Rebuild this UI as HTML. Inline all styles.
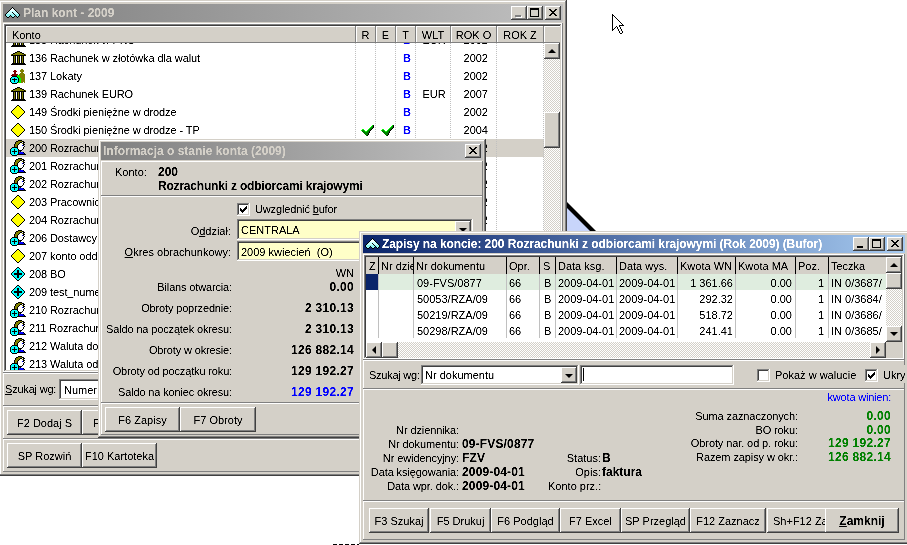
<!DOCTYPE html>
<html><head><meta charset="utf-8"><style>
html,body{margin:0;padding:0;}
body{will-change:transform;width:907px;height:545px;overflow:hidden;background:#fff;position:relative;font-family:"Liberation Sans",sans-serif;font-size:11px;color:#000;}
div{position:absolute;box-sizing:border-box;}
u{text-decoration:underline;text-underline-offset:1px;}
</style></head><body>
<svg width="0" height="0" style="position:absolute"><filter id="cr" x="0" y="0" width="100%" height="100%"><feComponentTransfer><feFuncA type="linear" slope="2" intercept="-0.45"/></feComponentTransfer></filter></svg>
<svg style="position:absolute;left:566px;top:195px;overflow:visible" width="40" height="40" shape-rendering="crispEdges"><polygon points="1,13 24,36 1,36" fill="#c8d5fb"/><polygon points="1,7 30,36 24,36 1,13" fill="#000" shape-rendering="auto"/></svg><svg style="position:absolute;left:612px;top:14px;overflow:visible" width="12" height="20" shape-rendering="crispEdges"><rect x="0" y="0" width="1" height="1" fill="#000"/><rect x="0" y="1" width="2" height="1" fill="#000"/><rect x="0" y="2" width="1" height="1" fill="#000"/><rect x="1" y="2" width="1" height="1" fill="#fff"/><rect x="2" y="2" width="1" height="1" fill="#000"/><rect x="0" y="3" width="1" height="1" fill="#000"/><rect x="1" y="3" width="2" height="1" fill="#fff"/><rect x="3" y="3" width="1" height="1" fill="#000"/><rect x="0" y="4" width="1" height="1" fill="#000"/><rect x="1" y="4" width="3" height="1" fill="#fff"/><rect x="4" y="4" width="1" height="1" fill="#000"/><rect x="0" y="5" width="1" height="1" fill="#000"/><rect x="1" y="5" width="4" height="1" fill="#fff"/><rect x="5" y="5" width="1" height="1" fill="#000"/><rect x="0" y="6" width="1" height="1" fill="#000"/><rect x="1" y="6" width="5" height="1" fill="#fff"/><rect x="6" y="6" width="1" height="1" fill="#000"/><rect x="0" y="7" width="1" height="1" fill="#000"/><rect x="1" y="7" width="6" height="1" fill="#fff"/><rect x="7" y="7" width="1" height="1" fill="#000"/><rect x="0" y="8" width="1" height="1" fill="#000"/><rect x="1" y="8" width="7" height="1" fill="#fff"/><rect x="8" y="8" width="1" height="1" fill="#000"/><rect x="0" y="9" width="1" height="1" fill="#000"/><rect x="1" y="9" width="8" height="1" fill="#fff"/><rect x="9" y="9" width="1" height="1" fill="#000"/><rect x="0" y="10" width="1" height="1" fill="#000"/><rect x="1" y="10" width="9" height="1" fill="#fff"/><rect x="10" y="10" width="1" height="1" fill="#000"/><rect x="0" y="11" width="1" height="1" fill="#000"/><rect x="1" y="11" width="6" height="1" fill="#fff"/><rect x="7" y="11" width="5" height="1" fill="#000"/><rect x="0" y="12" width="1" height="1" fill="#000"/><rect x="1" y="12" width="3" height="1" fill="#fff"/><rect x="4" y="12" width="1" height="1" fill="#000"/><rect x="5" y="12" width="2" height="1" fill="#fff"/><rect x="7" y="12" width="1" height="1" fill="#000"/><rect x="0" y="13" width="1" height="1" fill="#000"/><rect x="1" y="13" width="2" height="1" fill="#fff"/><rect x="3" y="13" width="1" height="1" fill="#000"/><rect x="5" y="13" width="1" height="1" fill="#000"/><rect x="6" y="13" width="2" height="1" fill="#fff"/><rect x="8" y="13" width="1" height="1" fill="#000"/><rect x="0" y="14" width="1" height="1" fill="#000"/><rect x="1" y="14" width="1" height="1" fill="#fff"/><rect x="2" y="14" width="1" height="1" fill="#000"/><rect x="5" y="14" width="1" height="1" fill="#000"/><rect x="6" y="14" width="2" height="1" fill="#fff"/><rect x="8" y="14" width="1" height="1" fill="#000"/><rect x="0" y="15" width="2" height="1" fill="#000"/><rect x="6" y="15" width="1" height="1" fill="#000"/><rect x="7" y="15" width="2" height="1" fill="#fff"/><rect x="9" y="15" width="1" height="1" fill="#000"/><rect x="0" y="16" width="1" height="1" fill="#000"/><rect x="6" y="16" width="1" height="1" fill="#000"/><rect x="7" y="16" width="2" height="1" fill="#fff"/><rect x="9" y="16" width="1" height="1" fill="#000"/><rect x="7" y="17" width="1" height="1" fill="#000"/><rect x="8" y="17" width="2" height="1" fill="#fff"/><rect x="10" y="17" width="1" height="1" fill="#000"/><rect x="7" y="18" width="1" height="1" fill="#000"/><rect x="8" y="18" width="2" height="1" fill="#fff"/><rect x="10" y="18" width="1" height="1" fill="#000"/><rect x="8" y="19" width="2" height="1" fill="#000"/></svg><div style="left:333px;top:544px;width:26px;height:1px;background:repeating-linear-gradient(to right,#000 0,#000 4px,transparent 4px,transparent 6px)"></div><div style="left:-1px;top:0px;width:568px;height:476px;overflow:hidden;background:#d4d0c8;box-shadow:inset -1px -1px #404040,inset 1px 1px #d4d0c8,inset -2px -2px #808080,inset 2px 2px #fff;"><div style="left:4px;top:4px;width:560px;height:18px;background:linear-gradient(to right,#808080,#c0c0c0)"></div><svg style="position:absolute;left:5px;top:7px;overflow:visible" width="17" height="11" shape-rendering="crispEdges"><rect x="8" y="0" width="1" height="1" fill="#000"/><rect x="7" y="1" width="1" height="1" fill="#000"/><rect x="8" y="1" width="1" height="1" fill="#f0ffff"/><rect x="9" y="1" width="1" height="1" fill="#000"/><rect x="6" y="2" width="1" height="1" fill="#000"/><rect x="7" y="2" width="3" height="1" fill="#f0ffff"/><rect x="10" y="2" width="1" height="1" fill="#000"/><rect x="5" y="3" width="1" height="1" fill="#000"/><rect x="6" y="3" width="5" height="1" fill="#f0ffff"/><rect x="11" y="3" width="1" height="1" fill="#000"/><rect x="4" y="4" width="1" height="1" fill="#000"/><rect x="5" y="4" width="7" height="1" fill="#c8ffff"/><rect x="12" y="4" width="1" height="1" fill="#000"/><rect x="3" y="5" width="1" height="1" fill="#000"/><rect x="4" y="5" width="4" height="1" fill="#c8ffff"/><rect x="8" y="5" width="1" height="1" fill="#000"/><rect x="9" y="5" width="4" height="1" fill="#c8ffff"/><rect x="13" y="5" width="1" height="1" fill="#000"/><rect x="2" y="6" width="1" height="1" fill="#000"/><rect x="3" y="6" width="6" height="1" fill="#c8ffff"/><rect x="9" y="6" width="1" height="1" fill="#000"/><rect x="10" y="6" width="4" height="1" fill="#c8ffff"/><rect x="14" y="6" width="1" height="1" fill="#000"/><rect x="1" y="7" width="1" height="1" fill="#000"/><rect x="2" y="7" width="8" height="1" fill="#90f4f4"/><rect x="10" y="7" width="1" height="1" fill="#000"/><rect x="11" y="7" width="4" height="1" fill="#90f4f4"/><rect x="15" y="7" width="1" height="1" fill="#000"/><rect x="1" y="8" width="1" height="1" fill="#000"/><rect x="2" y="8" width="4" height="1" fill="#90f4f4"/><rect x="6" y="8" width="1" height="1" fill="#000"/><rect x="7" y="8" width="4" height="1" fill="#90f4f4"/><rect x="11" y="8" width="1" height="1" fill="#000"/><rect x="12" y="8" width="3" height="1" fill="#90f4f4"/><rect x="15" y="8" width="1" height="1" fill="#000"/><rect x="2" y="9" width="1" height="1" fill="#000"/><rect x="3" y="9" width="2" height="1" fill="#90f4f4"/><rect x="5" y="9" width="1" height="1" fill="#000"/><rect x="7" y="9" width="1" height="1" fill="#000"/><rect x="8" y="9" width="2" height="1" fill="#90f4f4"/><rect x="10" y="9" width="1" height="1" fill="#000"/><rect x="12" y="9" width="1" height="1" fill="#000"/><rect x="13" y="9" width="1" height="1" fill="#90f4f4"/><rect x="14" y="9" width="1" height="1" fill="#000"/><rect x="3" y="10" width="2" height="1" fill="#000"/><rect x="8" y="10" width="2" height="1" fill="#000"/><rect x="13" y="10" width="1" height="1" fill="#000"/></svg><div style="left:24px;top:7px;font-size:12px;line-height:12px;font-weight:bold;color:#d4d0c8;white-space:pre;filter:url(#cr);">Plan kont - 2009</div><div style="left:512px;top:6px;width:16px;height:14px;background:#d4d0c8;box-shadow:inset -1px -1px #404040,inset 1px 1px #fff,inset -2px -2px #808080,inset 2px 2px #d4d0c8;"></div><div style="left:517px;top:16px;width:6px;height:2px;background:#fff"></div><div style="left:516px;top:15px;width:6px;height:2px;background:#808080"></div><div style="left:528px;top:6px;width:16px;height:14px;background:#d4d0c8;box-shadow:inset -1px -1px #404040,inset 1px 1px #fff,inset -2px -2px #808080,inset 2px 2px #d4d0c8;"></div><div style="left:531px;top:8px;width:9px;height:9px;box-shadow:inset 0 2px #000,inset 1px 0 #000,inset -1px 0 #000,inset 0 -1px #000"></div><div style="left:546px;top:6px;width:16px;height:14px;background:#d4d0c8;box-shadow:inset -1px -1px #404040,inset 1px 1px #fff,inset -2px -2px #808080,inset 2px 2px #d4d0c8;"></div><svg style="position:absolute;left:550px;top:9px;overflow:visible" width="8" height="7" shape-rendering="crispEdges"><rect x="0" y="0" width="2" height="1" fill="#000"/><rect x="6" y="0" width="2" height="1" fill="#000"/><rect x="1" y="1" width="2" height="1" fill="#000"/><rect x="5" y="1" width="2" height="1" fill="#000"/><rect x="2" y="2" width="4" height="1" fill="#000"/><rect x="3" y="3" width="2" height="1" fill="#000"/><rect x="2" y="4" width="4" height="1" fill="#000"/><rect x="1" y="5" width="2" height="1" fill="#000"/><rect x="5" y="5" width="2" height="1" fill="#000"/><rect x="0" y="6" width="2" height="1" fill="#000"/><rect x="6" y="6" width="2" height="1" fill="#000"/></svg><div style="left:4px;top:23px;width:560px;height:350px;box-shadow:inset -1px -1px #808080,inset 1px 1px #fff;"></div><div style="left:5px;top:24px;width:558px;height:348px;box-shadow:inset -1px -1px #fff,inset 1px 1px #808080,inset -2px -2px #d4d0c8,inset 2px 2px #404040;background:#fff"></div><div style="left:7px;top:26px;width:554px;height:344px;overflow:hidden;background:#fff"><div style="left:0px;top:0px;width:350px;height:17px;background:#d4d0c8;box-shadow:inset -1px -1px #808080,inset 1px 1px #fff"></div><div style="left:6px;top:4px;font-size:11px;line-height:11px;white-space:pre;filter:url(#cr);">Konto</div><div style="left:350px;top:0px;width:20px;height:17px;background:#d4d0c8;box-shadow:inset -1px -1px #808080,inset 1px 1px #fff"></div><div style="left:59.5px;top:4px;width:600px;text-align:center;font-size:11px;line-height:11px;white-space:pre;filter:url(#cr);">R</div><div style="left:370px;top:0px;width:20px;height:17px;background:#d4d0c8;box-shadow:inset -1px -1px #808080,inset 1px 1px #fff"></div><div style="left:79.5px;top:4px;width:600px;text-align:center;font-size:11px;line-height:11px;white-space:pre;filter:url(#cr);">E</div><div style="left:390px;top:0px;width:20px;height:17px;background:#d4d0c8;box-shadow:inset -1px -1px #808080,inset 1px 1px #fff"></div><div style="left:99.5px;top:4px;width:600px;text-align:center;font-size:11px;line-height:11px;white-space:pre;filter:url(#cr);">T</div><div style="left:410px;top:0px;width:35px;height:17px;background:#d4d0c8;box-shadow:inset -1px -1px #808080,inset 1px 1px #fff"></div><div style="left:127.0px;top:4px;width:600px;text-align:center;font-size:11px;line-height:11px;white-space:pre;filter:url(#cr);">WLT</div><div style="left:445px;top:0px;width:46px;height:17px;background:#d4d0c8;box-shadow:inset -1px -1px #808080,inset 1px 1px #fff"></div><div style="left:167.5px;top:4px;width:600px;text-align:center;font-size:11px;line-height:11px;white-space:pre;filter:url(#cr);">ROK O</div><div style="left:491px;top:0px;width:47px;height:17px;background:#d4d0c8;box-shadow:inset -1px -1px #808080,inset 1px 1px #fff"></div><div style="left:214.0px;top:4px;width:600px;text-align:center;font-size:11px;line-height:11px;white-space:pre;filter:url(#cr);">ROK Z</div><div style="left:538px;top:0px;width:17px;height:17px;background:#d4d0c8;box-shadow:inset -1px -1px #808080,inset 1px 1px #fff"></div><div style="left:0px;top:17px;width:538px;height:327px;overflow:hidden;"><svg style="position:absolute;left:4px;top:-11px;overflow:visible" width="16" height="15" shape-rendering="crispEdges"><rect x="7" y="1" width="3" height="1" fill="#000"/><rect x="5" y="2" width="2" height="1" fill="#000"/><rect x="7" y="2" width="3" height="1" fill="#808000"/><rect x="10" y="2" width="2" height="1" fill="#000"/><rect x="3" y="3" width="2" height="1" fill="#000"/><rect x="5" y="3" width="7" height="1" fill="#808000"/><rect x="12" y="3" width="2" height="1" fill="#000"/><rect x="1" y="4" width="1" height="1" fill="#808000"/><rect x="2" y="4" width="1" height="1" fill="#000"/><rect x="3" y="4" width="11" height="1" fill="#808000"/><rect x="14" y="4" width="1" height="1" fill="#000"/><rect x="15" y="4" width="1" height="1" fill="#808000"/><rect x="1" y="5" width="15" height="1" fill="#000"/><rect x="3" y="6" width="1" height="1" fill="#000"/><rect x="4" y="6" width="1" height="1" fill="#808000"/><rect x="5" y="6" width="1" height="1" fill="#000"/><rect x="6" y="6" width="1" height="1" fill="#fff"/><rect x="7" y="6" width="1" height="1" fill="#000"/><rect x="8" y="6" width="1" height="1" fill="#808000"/><rect x="9" y="6" width="1" height="1" fill="#000"/><rect x="10" y="6" width="1" height="1" fill="#fff"/><rect x="11" y="6" width="1" height="1" fill="#000"/><rect x="12" y="6" width="1" height="1" fill="#808000"/><rect x="13" y="6" width="1" height="1" fill="#000"/><rect x="3" y="7" width="1" height="1" fill="#000"/><rect x="4" y="7" width="1" height="1" fill="#808000"/><rect x="5" y="7" width="1" height="1" fill="#000"/><rect x="6" y="7" width="1" height="1" fill="#fff"/><rect x="7" y="7" width="1" height="1" fill="#000"/><rect x="8" y="7" width="1" height="1" fill="#808000"/><rect x="9" y="7" width="1" height="1" fill="#000"/><rect x="10" y="7" width="1" height="1" fill="#fff"/><rect x="11" y="7" width="1" height="1" fill="#000"/><rect x="12" y="7" width="1" height="1" fill="#808000"/><rect x="13" y="7" width="1" height="1" fill="#000"/><rect x="3" y="8" width="1" height="1" fill="#000"/><rect x="4" y="8" width="1" height="1" fill="#808000"/><rect x="5" y="8" width="1" height="1" fill="#000"/><rect x="6" y="8" width="1" height="1" fill="#fff"/><rect x="7" y="8" width="1" height="1" fill="#000"/><rect x="8" y="8" width="1" height="1" fill="#808000"/><rect x="9" y="8" width="1" height="1" fill="#000"/><rect x="10" y="8" width="1" height="1" fill="#fff"/><rect x="11" y="8" width="1" height="1" fill="#000"/><rect x="12" y="8" width="1" height="1" fill="#808000"/><rect x="13" y="8" width="1" height="1" fill="#000"/><rect x="3" y="9" width="1" height="1" fill="#000"/><rect x="4" y="9" width="1" height="1" fill="#808000"/><rect x="5" y="9" width="1" height="1" fill="#000"/><rect x="6" y="9" width="1" height="1" fill="#fff"/><rect x="7" y="9" width="1" height="1" fill="#000"/><rect x="8" y="9" width="1" height="1" fill="#808000"/><rect x="9" y="9" width="1" height="1" fill="#000"/><rect x="10" y="9" width="1" height="1" fill="#fff"/><rect x="11" y="9" width="1" height="1" fill="#000"/><rect x="12" y="9" width="1" height="1" fill="#808000"/><rect x="13" y="9" width="1" height="1" fill="#000"/><rect x="3" y="10" width="1" height="1" fill="#000"/><rect x="4" y="10" width="1" height="1" fill="#808000"/><rect x="5" y="10" width="1" height="1" fill="#000"/><rect x="6" y="10" width="1" height="1" fill="#fff"/><rect x="7" y="10" width="1" height="1" fill="#000"/><rect x="8" y="10" width="1" height="1" fill="#808000"/><rect x="9" y="10" width="1" height="1" fill="#000"/><rect x="10" y="10" width="1" height="1" fill="#fff"/><rect x="11" y="10" width="1" height="1" fill="#000"/><rect x="12" y="10" width="1" height="1" fill="#808000"/><rect x="13" y="10" width="1" height="1" fill="#000"/><rect x="3" y="11" width="1" height="1" fill="#000"/><rect x="4" y="11" width="1" height="1" fill="#808000"/><rect x="5" y="11" width="1" height="1" fill="#000"/><rect x="6" y="11" width="1" height="1" fill="#fff"/><rect x="7" y="11" width="1" height="1" fill="#000"/><rect x="8" y="11" width="1" height="1" fill="#808000"/><rect x="9" y="11" width="1" height="1" fill="#000"/><rect x="10" y="11" width="1" height="1" fill="#fff"/><rect x="11" y="11" width="1" height="1" fill="#000"/><rect x="12" y="11" width="1" height="1" fill="#808000"/><rect x="13" y="11" width="1" height="1" fill="#000"/><rect x="3" y="12" width="1" height="1" fill="#000"/><rect x="4" y="12" width="1" height="1" fill="#808000"/><rect x="5" y="12" width="1" height="1" fill="#000"/><rect x="6" y="12" width="1" height="1" fill="#fff"/><rect x="7" y="12" width="1" height="1" fill="#000"/><rect x="8" y="12" width="1" height="1" fill="#808000"/><rect x="9" y="12" width="1" height="1" fill="#000"/><rect x="10" y="12" width="1" height="1" fill="#fff"/><rect x="11" y="12" width="1" height="1" fill="#000"/><rect x="12" y="12" width="1" height="1" fill="#808000"/><rect x="13" y="12" width="1" height="1" fill="#000"/><rect x="2" y="13" width="13" height="1" fill="#000"/><rect x="1" y="14" width="15" height="1" fill="#000"/></svg><div style="left:23px;top:-8px;font-size:11px;line-height:11px;letter-spacing:-0.1px;white-space:pre;filter:url(#cr);">135 Rachunek w PKO</div><div style="left:101px;top:-8px;width:600px;text-align:center;font-size:11px;line-height:11px;font-weight:bold;color:#0000ff;white-space:pre;filter:url(#cr);">B</div><div style="left:128px;top:-8px;width:600px;text-align:center;font-size:11px;line-height:11px;white-space:pre;filter:url(#cr);">EUR</div><div style="left:-118px;top:-8px;width:600px;text-align:right;font-size:11px;line-height:11px;white-space:pre;filter:url(#cr);">2002</div><svg style="position:absolute;left:4px;top:7px;overflow:visible" width="16" height="15" shape-rendering="crispEdges"><rect x="7" y="1" width="3" height="1" fill="#000"/><rect x="5" y="2" width="2" height="1" fill="#000"/><rect x="7" y="2" width="3" height="1" fill="#808000"/><rect x="10" y="2" width="2" height="1" fill="#000"/><rect x="3" y="3" width="2" height="1" fill="#000"/><rect x="5" y="3" width="7" height="1" fill="#808000"/><rect x="12" y="3" width="2" height="1" fill="#000"/><rect x="1" y="4" width="1" height="1" fill="#808000"/><rect x="2" y="4" width="1" height="1" fill="#000"/><rect x="3" y="4" width="11" height="1" fill="#808000"/><rect x="14" y="4" width="1" height="1" fill="#000"/><rect x="15" y="4" width="1" height="1" fill="#808000"/><rect x="1" y="5" width="15" height="1" fill="#000"/><rect x="3" y="6" width="1" height="1" fill="#000"/><rect x="4" y="6" width="1" height="1" fill="#808000"/><rect x="5" y="6" width="1" height="1" fill="#000"/><rect x="6" y="6" width="1" height="1" fill="#fff"/><rect x="7" y="6" width="1" height="1" fill="#000"/><rect x="8" y="6" width="1" height="1" fill="#808000"/><rect x="9" y="6" width="1" height="1" fill="#000"/><rect x="10" y="6" width="1" height="1" fill="#fff"/><rect x="11" y="6" width="1" height="1" fill="#000"/><rect x="12" y="6" width="1" height="1" fill="#808000"/><rect x="13" y="6" width="1" height="1" fill="#000"/><rect x="3" y="7" width="1" height="1" fill="#000"/><rect x="4" y="7" width="1" height="1" fill="#808000"/><rect x="5" y="7" width="1" height="1" fill="#000"/><rect x="6" y="7" width="1" height="1" fill="#fff"/><rect x="7" y="7" width="1" height="1" fill="#000"/><rect x="8" y="7" width="1" height="1" fill="#808000"/><rect x="9" y="7" width="1" height="1" fill="#000"/><rect x="10" y="7" width="1" height="1" fill="#fff"/><rect x="11" y="7" width="1" height="1" fill="#000"/><rect x="12" y="7" width="1" height="1" fill="#808000"/><rect x="13" y="7" width="1" height="1" fill="#000"/><rect x="3" y="8" width="1" height="1" fill="#000"/><rect x="4" y="8" width="1" height="1" fill="#808000"/><rect x="5" y="8" width="1" height="1" fill="#000"/><rect x="6" y="8" width="1" height="1" fill="#fff"/><rect x="7" y="8" width="1" height="1" fill="#000"/><rect x="8" y="8" width="1" height="1" fill="#808000"/><rect x="9" y="8" width="1" height="1" fill="#000"/><rect x="10" y="8" width="1" height="1" fill="#fff"/><rect x="11" y="8" width="1" height="1" fill="#000"/><rect x="12" y="8" width="1" height="1" fill="#808000"/><rect x="13" y="8" width="1" height="1" fill="#000"/><rect x="3" y="9" width="1" height="1" fill="#000"/><rect x="4" y="9" width="1" height="1" fill="#808000"/><rect x="5" y="9" width="1" height="1" fill="#000"/><rect x="6" y="9" width="1" height="1" fill="#fff"/><rect x="7" y="9" width="1" height="1" fill="#000"/><rect x="8" y="9" width="1" height="1" fill="#808000"/><rect x="9" y="9" width="1" height="1" fill="#000"/><rect x="10" y="9" width="1" height="1" fill="#fff"/><rect x="11" y="9" width="1" height="1" fill="#000"/><rect x="12" y="9" width="1" height="1" fill="#808000"/><rect x="13" y="9" width="1" height="1" fill="#000"/><rect x="3" y="10" width="1" height="1" fill="#000"/><rect x="4" y="10" width="1" height="1" fill="#808000"/><rect x="5" y="10" width="1" height="1" fill="#000"/><rect x="6" y="10" width="1" height="1" fill="#fff"/><rect x="7" y="10" width="1" height="1" fill="#000"/><rect x="8" y="10" width="1" height="1" fill="#808000"/><rect x="9" y="10" width="1" height="1" fill="#000"/><rect x="10" y="10" width="1" height="1" fill="#fff"/><rect x="11" y="10" width="1" height="1" fill="#000"/><rect x="12" y="10" width="1" height="1" fill="#808000"/><rect x="13" y="10" width="1" height="1" fill="#000"/><rect x="3" y="11" width="1" height="1" fill="#000"/><rect x="4" y="11" width="1" height="1" fill="#808000"/><rect x="5" y="11" width="1" height="1" fill="#000"/><rect x="6" y="11" width="1" height="1" fill="#fff"/><rect x="7" y="11" width="1" height="1" fill="#000"/><rect x="8" y="11" width="1" height="1" fill="#808000"/><rect x="9" y="11" width="1" height="1" fill="#000"/><rect x="10" y="11" width="1" height="1" fill="#fff"/><rect x="11" y="11" width="1" height="1" fill="#000"/><rect x="12" y="11" width="1" height="1" fill="#808000"/><rect x="13" y="11" width="1" height="1" fill="#000"/><rect x="3" y="12" width="1" height="1" fill="#000"/><rect x="4" y="12" width="1" height="1" fill="#808000"/><rect x="5" y="12" width="1" height="1" fill="#000"/><rect x="6" y="12" width="1" height="1" fill="#fff"/><rect x="7" y="12" width="1" height="1" fill="#000"/><rect x="8" y="12" width="1" height="1" fill="#808000"/><rect x="9" y="12" width="1" height="1" fill="#000"/><rect x="10" y="12" width="1" height="1" fill="#fff"/><rect x="11" y="12" width="1" height="1" fill="#000"/><rect x="12" y="12" width="1" height="1" fill="#808000"/><rect x="13" y="12" width="1" height="1" fill="#000"/><rect x="2" y="13" width="13" height="1" fill="#000"/><rect x="1" y="14" width="15" height="1" fill="#000"/></svg><div style="left:23px;top:10px;font-size:11px;line-height:11px;letter-spacing:-0.1px;white-space:pre;filter:url(#cr);">136 Rachunek w złotówka dla walut</div><div style="left:101px;top:10px;width:600px;text-align:center;font-size:11px;line-height:11px;font-weight:bold;color:#0000ff;white-space:pre;filter:url(#cr);">B</div><div style="left:-118px;top:10px;width:600px;text-align:right;font-size:11px;line-height:11px;white-space:pre;filter:url(#cr);">2002</div><svg style="position:absolute;left:4px;top:25px;overflow:visible" width="16" height="16" shape-rendering="crispEdges"><rect x="11" y="1" width="2" height="1" fill="#808000"/><rect x="4" y="2" width="2" height="1" fill="#800000"/><rect x="10" y="2" width="4" height="1" fill="#808000"/><rect x="3" y="3" width="4" height="1" fill="#800000"/><rect x="10" y="3" width="4" height="1" fill="#808000"/><rect x="4" y="4" width="2" height="1" fill="#800000"/><rect x="11" y="4" width="2" height="1" fill="#808000"/><rect x="4" y="5" width="2" height="1" fill="#800000"/><rect x="10" y="5" width="4" height="1" fill="#808000"/><rect x="2" y="6" width="6" height="1" fill="#800000"/><rect x="9" y="6" width="6" height="1" fill="#808000"/><rect x="1" y="7" width="6" height="1" fill="#800000"/><rect x="7" y="7" width="2" height="1" fill="#00ff00"/><rect x="9" y="7" width="6" height="1" fill="#808000"/><rect x="2" y="8" width="5" height="1" fill="#000"/><rect x="7" y="8" width="3" height="1" fill="#00ff00"/><rect x="10" y="8" width="5" height="1" fill="#808000"/><rect x="1" y="9" width="1" height="1" fill="#000"/><rect x="2" y="9" width="5" height="1" fill="#00ffff"/><rect x="7" y="9" width="1" height="1" fill="#000"/><rect x="8" y="9" width="2" height="1" fill="#00ff00"/><rect x="10" y="9" width="5" height="1" fill="#808000"/><rect x="0" y="10" width="1" height="1" fill="#000"/><rect x="1" y="10" width="3" height="1" fill="#00ffff"/><rect x="4" y="10" width="1" height="1" fill="#000"/><rect x="5" y="10" width="3" height="1" fill="#00ffff"/><rect x="8" y="10" width="1" height="1" fill="#000"/><rect x="9" y="10" width="2" height="1" fill="#00ff00"/><rect x="11" y="10" width="4" height="1" fill="#808000"/><rect x="0" y="11" width="1" height="1" fill="#000"/><rect x="1" y="11" width="1" height="1" fill="#00ffff"/><rect x="2" y="11" width="5" height="1" fill="#000"/><rect x="7" y="11" width="1" height="1" fill="#00ffff"/><rect x="8" y="11" width="1" height="1" fill="#000"/><rect x="9" y="11" width="2" height="1" fill="#00ff00"/><rect x="11" y="11" width="4" height="1" fill="#808000"/><rect x="0" y="12" width="1" height="1" fill="#000"/><rect x="1" y="12" width="3" height="1" fill="#00ffff"/><rect x="4" y="12" width="1" height="1" fill="#000"/><rect x="5" y="12" width="3" height="1" fill="#00ffff"/><rect x="8" y="12" width="1" height="1" fill="#000"/><rect x="9" y="12" width="2" height="1" fill="#00ff00"/><rect x="11" y="12" width="4" height="1" fill="#808000"/><rect x="0" y="13" width="1" height="1" fill="#000"/><rect x="1" y="13" width="3" height="1" fill="#00ffff"/><rect x="4" y="13" width="1" height="1" fill="#000"/><rect x="5" y="13" width="3" height="1" fill="#00ffff"/><rect x="8" y="13" width="1" height="1" fill="#000"/><rect x="9" y="13" width="2" height="1" fill="#00ff00"/><rect x="11" y="13" width="4" height="1" fill="#808000"/><rect x="1" y="14" width="1" height="1" fill="#000"/><rect x="2" y="14" width="5" height="1" fill="#00ffff"/><rect x="7" y="14" width="1" height="1" fill="#000"/><rect x="8" y="14" width="3" height="1" fill="#00ff00"/><rect x="11" y="14" width="2" height="1" fill="#808000"/><rect x="14" y="14" width="1" height="1" fill="#808000"/><rect x="2" y="15" width="5" height="1" fill="#000"/></svg><div style="left:23px;top:28px;font-size:11px;line-height:11px;letter-spacing:-0.1px;white-space:pre;filter:url(#cr);">137 Lokaty</div><div style="left:101px;top:28px;width:600px;text-align:center;font-size:11px;line-height:11px;font-weight:bold;color:#0000ff;white-space:pre;filter:url(#cr);">B</div><div style="left:-118px;top:28px;width:600px;text-align:right;font-size:11px;line-height:11px;white-space:pre;filter:url(#cr);">2002</div><svg style="position:absolute;left:4px;top:43px;overflow:visible" width="16" height="15" shape-rendering="crispEdges"><rect x="7" y="1" width="3" height="1" fill="#000"/><rect x="5" y="2" width="2" height="1" fill="#000"/><rect x="7" y="2" width="3" height="1" fill="#808000"/><rect x="10" y="2" width="2" height="1" fill="#000"/><rect x="3" y="3" width="2" height="1" fill="#000"/><rect x="5" y="3" width="7" height="1" fill="#808000"/><rect x="12" y="3" width="2" height="1" fill="#000"/><rect x="1" y="4" width="1" height="1" fill="#808000"/><rect x="2" y="4" width="1" height="1" fill="#000"/><rect x="3" y="4" width="11" height="1" fill="#808000"/><rect x="14" y="4" width="1" height="1" fill="#000"/><rect x="15" y="4" width="1" height="1" fill="#808000"/><rect x="1" y="5" width="15" height="1" fill="#000"/><rect x="3" y="6" width="1" height="1" fill="#000"/><rect x="4" y="6" width="1" height="1" fill="#808000"/><rect x="5" y="6" width="1" height="1" fill="#000"/><rect x="6" y="6" width="1" height="1" fill="#fff"/><rect x="7" y="6" width="1" height="1" fill="#000"/><rect x="8" y="6" width="1" height="1" fill="#808000"/><rect x="9" y="6" width="1" height="1" fill="#000"/><rect x="10" y="6" width="1" height="1" fill="#fff"/><rect x="11" y="6" width="1" height="1" fill="#000"/><rect x="12" y="6" width="1" height="1" fill="#808000"/><rect x="13" y="6" width="1" height="1" fill="#000"/><rect x="3" y="7" width="1" height="1" fill="#000"/><rect x="4" y="7" width="1" height="1" fill="#808000"/><rect x="5" y="7" width="1" height="1" fill="#000"/><rect x="6" y="7" width="1" height="1" fill="#fff"/><rect x="7" y="7" width="1" height="1" fill="#000"/><rect x="8" y="7" width="1" height="1" fill="#808000"/><rect x="9" y="7" width="1" height="1" fill="#000"/><rect x="10" y="7" width="1" height="1" fill="#fff"/><rect x="11" y="7" width="1" height="1" fill="#000"/><rect x="12" y="7" width="1" height="1" fill="#808000"/><rect x="13" y="7" width="1" height="1" fill="#000"/><rect x="3" y="8" width="1" height="1" fill="#000"/><rect x="4" y="8" width="1" height="1" fill="#808000"/><rect x="5" y="8" width="1" height="1" fill="#000"/><rect x="6" y="8" width="1" height="1" fill="#fff"/><rect x="7" y="8" width="1" height="1" fill="#000"/><rect x="8" y="8" width="1" height="1" fill="#808000"/><rect x="9" y="8" width="1" height="1" fill="#000"/><rect x="10" y="8" width="1" height="1" fill="#fff"/><rect x="11" y="8" width="1" height="1" fill="#000"/><rect x="12" y="8" width="1" height="1" fill="#808000"/><rect x="13" y="8" width="1" height="1" fill="#000"/><rect x="3" y="9" width="1" height="1" fill="#000"/><rect x="4" y="9" width="1" height="1" fill="#808000"/><rect x="5" y="9" width="1" height="1" fill="#000"/><rect x="6" y="9" width="1" height="1" fill="#fff"/><rect x="7" y="9" width="1" height="1" fill="#000"/><rect x="8" y="9" width="1" height="1" fill="#808000"/><rect x="9" y="9" width="1" height="1" fill="#000"/><rect x="10" y="9" width="1" height="1" fill="#fff"/><rect x="11" y="9" width="1" height="1" fill="#000"/><rect x="12" y="9" width="1" height="1" fill="#808000"/><rect x="13" y="9" width="1" height="1" fill="#000"/><rect x="3" y="10" width="1" height="1" fill="#000"/><rect x="4" y="10" width="1" height="1" fill="#808000"/><rect x="5" y="10" width="1" height="1" fill="#000"/><rect x="6" y="10" width="1" height="1" fill="#fff"/><rect x="7" y="10" width="1" height="1" fill="#000"/><rect x="8" y="10" width="1" height="1" fill="#808000"/><rect x="9" y="10" width="1" height="1" fill="#000"/><rect x="10" y="10" width="1" height="1" fill="#fff"/><rect x="11" y="10" width="1" height="1" fill="#000"/><rect x="12" y="10" width="1" height="1" fill="#808000"/><rect x="13" y="10" width="1" height="1" fill="#000"/><rect x="3" y="11" width="1" height="1" fill="#000"/><rect x="4" y="11" width="1" height="1" fill="#808000"/><rect x="5" y="11" width="1" height="1" fill="#000"/><rect x="6" y="11" width="1" height="1" fill="#fff"/><rect x="7" y="11" width="1" height="1" fill="#000"/><rect x="8" y="11" width="1" height="1" fill="#808000"/><rect x="9" y="11" width="1" height="1" fill="#000"/><rect x="10" y="11" width="1" height="1" fill="#fff"/><rect x="11" y="11" width="1" height="1" fill="#000"/><rect x="12" y="11" width="1" height="1" fill="#808000"/><rect x="13" y="11" width="1" height="1" fill="#000"/><rect x="3" y="12" width="1" height="1" fill="#000"/><rect x="4" y="12" width="1" height="1" fill="#808000"/><rect x="5" y="12" width="1" height="1" fill="#000"/><rect x="6" y="12" width="1" height="1" fill="#fff"/><rect x="7" y="12" width="1" height="1" fill="#000"/><rect x="8" y="12" width="1" height="1" fill="#808000"/><rect x="9" y="12" width="1" height="1" fill="#000"/><rect x="10" y="12" width="1" height="1" fill="#fff"/><rect x="11" y="12" width="1" height="1" fill="#000"/><rect x="12" y="12" width="1" height="1" fill="#808000"/><rect x="13" y="12" width="1" height="1" fill="#000"/><rect x="2" y="13" width="13" height="1" fill="#000"/><rect x="1" y="14" width="15" height="1" fill="#000"/></svg><div style="left:23px;top:46px;font-size:11px;line-height:11px;letter-spacing:-0.1px;white-space:pre;filter:url(#cr);">139 Rachunek EURO</div><div style="left:101px;top:46px;width:600px;text-align:center;font-size:11px;line-height:11px;font-weight:bold;color:#0000ff;white-space:pre;filter:url(#cr);">B</div><div style="left:128px;top:46px;width:600px;text-align:center;font-size:11px;line-height:11px;white-space:pre;filter:url(#cr);">EUR</div><div style="left:-118px;top:46px;width:600px;text-align:right;font-size:11px;line-height:11px;white-space:pre;filter:url(#cr);">2007</div><svg style="position:absolute;left:4px;top:61px;overflow:visible" width="16" height="15" shape-rendering="crispEdges"><rect x="7" y="1" width="2" height="1" fill="#000"/><rect x="6" y="2" width="1" height="1" fill="#000"/><rect x="7" y="2" width="2" height="1" fill="#ffff00"/><rect x="9" y="2" width="1" height="1" fill="#000"/><rect x="5" y="3" width="1" height="1" fill="#000"/><rect x="6" y="3" width="4" height="1" fill="#ffff00"/><rect x="10" y="3" width="1" height="1" fill="#000"/><rect x="4" y="4" width="1" height="1" fill="#000"/><rect x="5" y="4" width="6" height="1" fill="#ffff00"/><rect x="11" y="4" width="1" height="1" fill="#000"/><rect x="3" y="5" width="1" height="1" fill="#000"/><rect x="4" y="5" width="8" height="1" fill="#ffff00"/><rect x="12" y="5" width="1" height="1" fill="#000"/><rect x="2" y="6" width="1" height="1" fill="#000"/><rect x="3" y="6" width="10" height="1" fill="#ffff00"/><rect x="13" y="6" width="1" height="1" fill="#000"/><rect x="1" y="7" width="1" height="1" fill="#000"/><rect x="2" y="7" width="12" height="1" fill="#ffff00"/><rect x="14" y="7" width="1" height="1" fill="#000"/><rect x="1" y="8" width="1" height="1" fill="#000"/><rect x="2" y="8" width="12" height="1" fill="#ffff00"/><rect x="14" y="8" width="1" height="1" fill="#000"/><rect x="2" y="9" width="1" height="1" fill="#000"/><rect x="3" y="9" width="10" height="1" fill="#ffff00"/><rect x="13" y="9" width="1" height="1" fill="#000"/><rect x="3" y="10" width="1" height="1" fill="#000"/><rect x="4" y="10" width="8" height="1" fill="#ffff00"/><rect x="12" y="10" width="1" height="1" fill="#000"/><rect x="4" y="11" width="1" height="1" fill="#000"/><rect x="5" y="11" width="6" height="1" fill="#ffff00"/><rect x="11" y="11" width="1" height="1" fill="#000"/><rect x="5" y="12" width="1" height="1" fill="#000"/><rect x="6" y="12" width="4" height="1" fill="#ffff00"/><rect x="10" y="12" width="1" height="1" fill="#000"/><rect x="6" y="13" width="1" height="1" fill="#000"/><rect x="7" y="13" width="2" height="1" fill="#ffff00"/><rect x="9" y="13" width="1" height="1" fill="#000"/><rect x="7" y="14" width="2" height="1" fill="#000"/></svg><div style="left:23px;top:64px;font-size:11px;line-height:11px;letter-spacing:-0.1px;white-space:pre;filter:url(#cr);">149 Środki pieniężne w drodze</div><div style="left:101px;top:64px;width:600px;text-align:center;font-size:11px;line-height:11px;font-weight:bold;color:#0000ff;white-space:pre;filter:url(#cr);">B</div><div style="left:-118px;top:64px;width:600px;text-align:right;font-size:11px;line-height:11px;white-space:pre;filter:url(#cr);">2002</div><svg style="position:absolute;left:4px;top:79px;overflow:visible" width="16" height="15" shape-rendering="crispEdges"><rect x="7" y="1" width="2" height="1" fill="#000"/><rect x="6" y="2" width="1" height="1" fill="#000"/><rect x="7" y="2" width="2" height="1" fill="#ffff00"/><rect x="9" y="2" width="1" height="1" fill="#000"/><rect x="5" y="3" width="1" height="1" fill="#000"/><rect x="6" y="3" width="4" height="1" fill="#ffff00"/><rect x="10" y="3" width="1" height="1" fill="#000"/><rect x="4" y="4" width="1" height="1" fill="#000"/><rect x="5" y="4" width="6" height="1" fill="#ffff00"/><rect x="11" y="4" width="1" height="1" fill="#000"/><rect x="3" y="5" width="1" height="1" fill="#000"/><rect x="4" y="5" width="8" height="1" fill="#ffff00"/><rect x="12" y="5" width="1" height="1" fill="#000"/><rect x="2" y="6" width="1" height="1" fill="#000"/><rect x="3" y="6" width="10" height="1" fill="#ffff00"/><rect x="13" y="6" width="1" height="1" fill="#000"/><rect x="1" y="7" width="1" height="1" fill="#000"/><rect x="2" y="7" width="12" height="1" fill="#ffff00"/><rect x="14" y="7" width="1" height="1" fill="#000"/><rect x="1" y="8" width="1" height="1" fill="#000"/><rect x="2" y="8" width="12" height="1" fill="#ffff00"/><rect x="14" y="8" width="1" height="1" fill="#000"/><rect x="2" y="9" width="1" height="1" fill="#000"/><rect x="3" y="9" width="10" height="1" fill="#ffff00"/><rect x="13" y="9" width="1" height="1" fill="#000"/><rect x="3" y="10" width="1" height="1" fill="#000"/><rect x="4" y="10" width="8" height="1" fill="#ffff00"/><rect x="12" y="10" width="1" height="1" fill="#000"/><rect x="4" y="11" width="1" height="1" fill="#000"/><rect x="5" y="11" width="6" height="1" fill="#ffff00"/><rect x="11" y="11" width="1" height="1" fill="#000"/><rect x="5" y="12" width="1" height="1" fill="#000"/><rect x="6" y="12" width="4" height="1" fill="#ffff00"/><rect x="10" y="12" width="1" height="1" fill="#000"/><rect x="6" y="13" width="1" height="1" fill="#000"/><rect x="7" y="13" width="2" height="1" fill="#ffff00"/><rect x="9" y="13" width="1" height="1" fill="#000"/><rect x="7" y="14" width="2" height="1" fill="#000"/></svg><div style="left:23px;top:82px;font-size:11px;line-height:11px;letter-spacing:-0.1px;white-space:pre;filter:url(#cr);">150 Środki pieniężne w drodze - TP</div><svg style="position:absolute;left:355px;top:82px;overflow:visible" width="13" height="11" shape-rendering="crispEdges"><rect x="11" y="0" width="1" height="1" fill="#00ff00"/><rect x="12" y="0" width="1" height="1" fill="#000"/><rect x="10" y="1" width="1" height="1" fill="#00ff00"/><rect x="11" y="1" width="1" height="1" fill="#008000"/><rect x="12" y="1" width="1" height="1" fill="#000"/><rect x="9" y="2" width="1" height="1" fill="#00ff00"/><rect x="10" y="2" width="2" height="1" fill="#008000"/><rect x="12" y="2" width="1" height="1" fill="#000"/><rect x="8" y="3" width="1" height="1" fill="#00ff00"/><rect x="9" y="3" width="2" height="1" fill="#008000"/><rect x="11" y="3" width="1" height="1" fill="#000"/><rect x="1" y="4" width="2" height="1" fill="#00ff00"/><rect x="7" y="4" width="1" height="1" fill="#00ff00"/><rect x="8" y="4" width="2" height="1" fill="#008000"/><rect x="10" y="4" width="1" height="1" fill="#000"/><rect x="0" y="5" width="1" height="1" fill="#00ff00"/><rect x="1" y="5" width="2" height="1" fill="#008000"/><rect x="3" y="5" width="1" height="1" fill="#00ff00"/><rect x="6" y="5" width="1" height="1" fill="#00ff00"/><rect x="7" y="5" width="2" height="1" fill="#008000"/><rect x="9" y="5" width="1" height="1" fill="#000"/><rect x="1" y="6" width="3" height="1" fill="#008000"/><rect x="4" y="6" width="2" height="1" fill="#00ff00"/><rect x="6" y="6" width="2" height="1" fill="#008000"/><rect x="8" y="6" width="1" height="1" fill="#000"/><rect x="2" y="7" width="6" height="1" fill="#008000"/><rect x="8" y="7" width="1" height="1" fill="#000"/><rect x="3" y="8" width="4" height="1" fill="#008000"/><rect x="7" y="8" width="1" height="1" fill="#000"/><rect x="4" y="9" width="3" height="1" fill="#008000"/><rect x="7" y="9" width="1" height="1" fill="#000"/><rect x="5" y="10" width="1" height="1" fill="#008000"/><rect x="6" y="10" width="1" height="1" fill="#000"/></svg><svg style="position:absolute;left:375px;top:82px;overflow:visible" width="13" height="11" shape-rendering="crispEdges"><rect x="11" y="0" width="1" height="1" fill="#00ff00"/><rect x="12" y="0" width="1" height="1" fill="#000"/><rect x="10" y="1" width="1" height="1" fill="#00ff00"/><rect x="11" y="1" width="1" height="1" fill="#008000"/><rect x="12" y="1" width="1" height="1" fill="#000"/><rect x="9" y="2" width="1" height="1" fill="#00ff00"/><rect x="10" y="2" width="2" height="1" fill="#008000"/><rect x="12" y="2" width="1" height="1" fill="#000"/><rect x="8" y="3" width="1" height="1" fill="#00ff00"/><rect x="9" y="3" width="2" height="1" fill="#008000"/><rect x="11" y="3" width="1" height="1" fill="#000"/><rect x="1" y="4" width="2" height="1" fill="#00ff00"/><rect x="7" y="4" width="1" height="1" fill="#00ff00"/><rect x="8" y="4" width="2" height="1" fill="#008000"/><rect x="10" y="4" width="1" height="1" fill="#000"/><rect x="0" y="5" width="1" height="1" fill="#00ff00"/><rect x="1" y="5" width="2" height="1" fill="#008000"/><rect x="3" y="5" width="1" height="1" fill="#00ff00"/><rect x="6" y="5" width="1" height="1" fill="#00ff00"/><rect x="7" y="5" width="2" height="1" fill="#008000"/><rect x="9" y="5" width="1" height="1" fill="#000"/><rect x="1" y="6" width="3" height="1" fill="#008000"/><rect x="4" y="6" width="2" height="1" fill="#00ff00"/><rect x="6" y="6" width="2" height="1" fill="#008000"/><rect x="8" y="6" width="1" height="1" fill="#000"/><rect x="2" y="7" width="6" height="1" fill="#008000"/><rect x="8" y="7" width="1" height="1" fill="#000"/><rect x="3" y="8" width="4" height="1" fill="#008000"/><rect x="7" y="8" width="1" height="1" fill="#000"/><rect x="4" y="9" width="3" height="1" fill="#008000"/><rect x="7" y="9" width="1" height="1" fill="#000"/><rect x="5" y="10" width="1" height="1" fill="#008000"/><rect x="6" y="10" width="1" height="1" fill="#000"/></svg><div style="left:101px;top:82px;width:600px;text-align:center;font-size:11px;line-height:11px;font-weight:bold;color:#0000ff;white-space:pre;filter:url(#cr);">B</div><div style="left:-118px;top:82px;width:600px;text-align:right;font-size:11px;line-height:11px;white-space:pre;filter:url(#cr);">2004</div><div style="left:0px;top:96px;width:538px;height:18px;background:#d4d0c8"></div><svg style="position:absolute;left:4px;top:97px;overflow:visible" width="16" height="16" shape-rendering="crispEdges"><rect x="8" y="0" width="4" height="1" fill="#000"/><rect x="6" y="1" width="2" height="1" fill="#000"/><rect x="8" y="1" width="4" height="1" fill="#808000"/><rect x="12" y="1" width="2" height="1" fill="#000"/><rect x="5" y="2" width="1" height="1" fill="#000"/><rect x="6" y="2" width="4" height="1" fill="#808000"/><rect x="10" y="2" width="2" height="1" fill="#000"/><rect x="12" y="2" width="1" height="1" fill="#fff"/><rect x="13" y="2" width="2" height="1" fill="#000"/><rect x="5" y="3" width="1" height="1" fill="#000"/><rect x="6" y="3" width="3" height="1" fill="#808000"/><rect x="9" y="3" width="1" height="1" fill="#000"/><rect x="10" y="3" width="2" height="1" fill="#fff"/><rect x="12" y="3" width="1" height="1" fill="#808000"/><rect x="13" y="3" width="1" height="1" fill="#000"/><rect x="4" y="4" width="1" height="1" fill="#000"/><rect x="5" y="4" width="3" height="1" fill="#808000"/><rect x="8" y="4" width="1" height="1" fill="#000"/><rect x="9" y="4" width="4" height="1" fill="#fff"/><rect x="13" y="4" width="2" height="1" fill="#000"/><rect x="4" y="5" width="1" height="1" fill="#000"/><rect x="5" y="5" width="2" height="1" fill="#808000"/><rect x="7" y="5" width="1" height="1" fill="#000"/><rect x="8" y="5" width="4" height="1" fill="#fff"/><rect x="12" y="5" width="1" height="1" fill="#0000ff"/><rect x="13" y="5" width="1" height="1" fill="#000"/><rect x="4" y="6" width="1" height="1" fill="#000"/><rect x="5" y="6" width="2" height="1" fill="#808000"/><rect x="7" y="6" width="1" height="1" fill="#000"/><rect x="8" y="6" width="6" height="1" fill="#fff"/><rect x="14" y="6" width="1" height="1" fill="#000"/><rect x="2" y="7" width="6" height="1" fill="#000"/><rect x="8" y="7" width="5" height="1" fill="#fff"/><rect x="13" y="7" width="1" height="1" fill="#000"/><rect x="1" y="8" width="1" height="1" fill="#000"/><rect x="2" y="8" width="5" height="1" fill="#00ffff"/><rect x="7" y="8" width="1" height="1" fill="#000"/><rect x="8" y="8" width="5" height="1" fill="#fff"/><rect x="13" y="8" width="1" height="1" fill="#000"/><rect x="0" y="9" width="1" height="1" fill="#000"/><rect x="1" y="9" width="3" height="1" fill="#00ffff"/><rect x="4" y="9" width="1" height="1" fill="#000"/><rect x="5" y="9" width="3" height="1" fill="#00ffff"/><rect x="8" y="9" width="1" height="1" fill="#000"/><rect x="9" y="9" width="3" height="1" fill="#fff"/><rect x="12" y="9" width="1" height="1" fill="#000"/><rect x="0" y="10" width="1" height="1" fill="#000"/><rect x="1" y="10" width="3" height="1" fill="#00ffff"/><rect x="4" y="10" width="1" height="1" fill="#000"/><rect x="5" y="10" width="3" height="1" fill="#00ffff"/><rect x="8" y="10" width="4" height="1" fill="#000"/><rect x="0" y="11" width="1" height="1" fill="#000"/><rect x="1" y="11" width="1" height="1" fill="#00ffff"/><rect x="2" y="11" width="5" height="1" fill="#000"/><rect x="7" y="11" width="1" height="1" fill="#00ffff"/><rect x="8" y="11" width="1" height="1" fill="#000"/><rect x="9" y="11" width="1" height="1" fill="#808000"/><rect x="10" y="11" width="1" height="1" fill="#000"/><rect x="0" y="12" width="1" height="1" fill="#000"/><rect x="1" y="12" width="3" height="1" fill="#00ffff"/><rect x="4" y="12" width="1" height="1" fill="#000"/><rect x="5" y="12" width="3" height="1" fill="#00ffff"/><rect x="8" y="12" width="1" height="1" fill="#000"/><rect x="9" y="12" width="4" height="1" fill="#0000ff"/><rect x="13" y="12" width="1" height="1" fill="#000"/><rect x="0" y="13" width="1" height="1" fill="#000"/><rect x="1" y="13" width="3" height="1" fill="#00ffff"/><rect x="4" y="13" width="1" height="1" fill="#000"/><rect x="5" y="13" width="3" height="1" fill="#00ffff"/><rect x="8" y="13" width="1" height="1" fill="#000"/><rect x="9" y="13" width="5" height="1" fill="#0000ff"/><rect x="14" y="13" width="1" height="1" fill="#000"/><rect x="1" y="14" width="1" height="1" fill="#000"/><rect x="2" y="14" width="5" height="1" fill="#00ffff"/><rect x="7" y="14" width="9" height="1" fill="#000"/><rect x="2" y="15" width="5" height="1" fill="#000"/></svg><div style="left:23px;top:100px;font-size:11px;line-height:11px;letter-spacing:-0.1px;white-space:pre;filter:url(#cr);">200 Rozrachunki z odbiorcami krajowymi</div><div style="left:101px;top:100px;width:600px;text-align:center;font-size:11px;line-height:11px;font-weight:bold;color:#0000ff;white-space:pre;filter:url(#cr);">B</div><div style="left:-118px;top:100px;width:600px;text-align:right;font-size:11px;line-height:11px;white-space:pre;filter:url(#cr);">2002</div><svg style="position:absolute;left:4px;top:115px;overflow:visible" width="16" height="16" shape-rendering="crispEdges"><rect x="8" y="0" width="4" height="1" fill="#000"/><rect x="6" y="1" width="2" height="1" fill="#000"/><rect x="8" y="1" width="4" height="1" fill="#808000"/><rect x="12" y="1" width="2" height="1" fill="#000"/><rect x="5" y="2" width="1" height="1" fill="#000"/><rect x="6" y="2" width="4" height="1" fill="#808000"/><rect x="10" y="2" width="2" height="1" fill="#000"/><rect x="12" y="2" width="1" height="1" fill="#fff"/><rect x="13" y="2" width="2" height="1" fill="#000"/><rect x="5" y="3" width="1" height="1" fill="#000"/><rect x="6" y="3" width="3" height="1" fill="#808000"/><rect x="9" y="3" width="1" height="1" fill="#000"/><rect x="10" y="3" width="2" height="1" fill="#fff"/><rect x="12" y="3" width="1" height="1" fill="#808000"/><rect x="13" y="3" width="1" height="1" fill="#000"/><rect x="4" y="4" width="1" height="1" fill="#000"/><rect x="5" y="4" width="3" height="1" fill="#808000"/><rect x="8" y="4" width="1" height="1" fill="#000"/><rect x="9" y="4" width="4" height="1" fill="#fff"/><rect x="13" y="4" width="2" height="1" fill="#000"/><rect x="4" y="5" width="1" height="1" fill="#000"/><rect x="5" y="5" width="2" height="1" fill="#808000"/><rect x="7" y="5" width="1" height="1" fill="#000"/><rect x="8" y="5" width="4" height="1" fill="#fff"/><rect x="12" y="5" width="1" height="1" fill="#0000ff"/><rect x="13" y="5" width="1" height="1" fill="#000"/><rect x="4" y="6" width="1" height="1" fill="#000"/><rect x="5" y="6" width="2" height="1" fill="#808000"/><rect x="7" y="6" width="1" height="1" fill="#000"/><rect x="8" y="6" width="6" height="1" fill="#fff"/><rect x="14" y="6" width="1" height="1" fill="#000"/><rect x="2" y="7" width="6" height="1" fill="#000"/><rect x="8" y="7" width="5" height="1" fill="#fff"/><rect x="13" y="7" width="1" height="1" fill="#000"/><rect x="1" y="8" width="1" height="1" fill="#000"/><rect x="2" y="8" width="5" height="1" fill="#00ffff"/><rect x="7" y="8" width="1" height="1" fill="#000"/><rect x="8" y="8" width="5" height="1" fill="#fff"/><rect x="13" y="8" width="1" height="1" fill="#000"/><rect x="0" y="9" width="1" height="1" fill="#000"/><rect x="1" y="9" width="3" height="1" fill="#00ffff"/><rect x="4" y="9" width="1" height="1" fill="#000"/><rect x="5" y="9" width="3" height="1" fill="#00ffff"/><rect x="8" y="9" width="1" height="1" fill="#000"/><rect x="9" y="9" width="3" height="1" fill="#fff"/><rect x="12" y="9" width="1" height="1" fill="#000"/><rect x="0" y="10" width="1" height="1" fill="#000"/><rect x="1" y="10" width="3" height="1" fill="#00ffff"/><rect x="4" y="10" width="1" height="1" fill="#000"/><rect x="5" y="10" width="3" height="1" fill="#00ffff"/><rect x="8" y="10" width="4" height="1" fill="#000"/><rect x="0" y="11" width="1" height="1" fill="#000"/><rect x="1" y="11" width="1" height="1" fill="#00ffff"/><rect x="2" y="11" width="5" height="1" fill="#000"/><rect x="7" y="11" width="1" height="1" fill="#00ffff"/><rect x="8" y="11" width="1" height="1" fill="#000"/><rect x="9" y="11" width="1" height="1" fill="#808000"/><rect x="10" y="11" width="1" height="1" fill="#000"/><rect x="0" y="12" width="1" height="1" fill="#000"/><rect x="1" y="12" width="3" height="1" fill="#00ffff"/><rect x="4" y="12" width="1" height="1" fill="#000"/><rect x="5" y="12" width="3" height="1" fill="#00ffff"/><rect x="8" y="12" width="1" height="1" fill="#000"/><rect x="9" y="12" width="4" height="1" fill="#0000ff"/><rect x="13" y="12" width="1" height="1" fill="#000"/><rect x="0" y="13" width="1" height="1" fill="#000"/><rect x="1" y="13" width="3" height="1" fill="#00ffff"/><rect x="4" y="13" width="1" height="1" fill="#000"/><rect x="5" y="13" width="3" height="1" fill="#00ffff"/><rect x="8" y="13" width="1" height="1" fill="#000"/><rect x="9" y="13" width="5" height="1" fill="#0000ff"/><rect x="14" y="13" width="1" height="1" fill="#000"/><rect x="1" y="14" width="1" height="1" fill="#000"/><rect x="2" y="14" width="5" height="1" fill="#00ffff"/><rect x="7" y="14" width="9" height="1" fill="#000"/><rect x="2" y="15" width="5" height="1" fill="#000"/></svg><div style="left:23px;top:118px;font-size:11px;line-height:11px;letter-spacing:-0.1px;white-space:pre;filter:url(#cr);">201 Rozrachunki z odbiorcami zagr.</div><div style="left:101px;top:118px;width:600px;text-align:center;font-size:11px;line-height:11px;font-weight:bold;color:#0000ff;white-space:pre;filter:url(#cr);">B</div><div style="left:-118px;top:118px;width:600px;text-align:right;font-size:11px;line-height:11px;white-space:pre;filter:url(#cr);">2002</div><svg style="position:absolute;left:4px;top:133px;overflow:visible" width="16" height="16" shape-rendering="crispEdges"><rect x="8" y="0" width="4" height="1" fill="#000"/><rect x="6" y="1" width="2" height="1" fill="#000"/><rect x="8" y="1" width="4" height="1" fill="#808000"/><rect x="12" y="1" width="2" height="1" fill="#000"/><rect x="5" y="2" width="1" height="1" fill="#000"/><rect x="6" y="2" width="4" height="1" fill="#808000"/><rect x="10" y="2" width="2" height="1" fill="#000"/><rect x="12" y="2" width="1" height="1" fill="#fff"/><rect x="13" y="2" width="2" height="1" fill="#000"/><rect x="5" y="3" width="1" height="1" fill="#000"/><rect x="6" y="3" width="3" height="1" fill="#808000"/><rect x="9" y="3" width="1" height="1" fill="#000"/><rect x="10" y="3" width="2" height="1" fill="#fff"/><rect x="12" y="3" width="1" height="1" fill="#808000"/><rect x="13" y="3" width="1" height="1" fill="#000"/><rect x="4" y="4" width="1" height="1" fill="#000"/><rect x="5" y="4" width="3" height="1" fill="#808000"/><rect x="8" y="4" width="1" height="1" fill="#000"/><rect x="9" y="4" width="4" height="1" fill="#fff"/><rect x="13" y="4" width="2" height="1" fill="#000"/><rect x="4" y="5" width="1" height="1" fill="#000"/><rect x="5" y="5" width="2" height="1" fill="#808000"/><rect x="7" y="5" width="1" height="1" fill="#000"/><rect x="8" y="5" width="4" height="1" fill="#fff"/><rect x="12" y="5" width="1" height="1" fill="#0000ff"/><rect x="13" y="5" width="1" height="1" fill="#000"/><rect x="4" y="6" width="1" height="1" fill="#000"/><rect x="5" y="6" width="2" height="1" fill="#808000"/><rect x="7" y="6" width="1" height="1" fill="#000"/><rect x="8" y="6" width="6" height="1" fill="#fff"/><rect x="14" y="6" width="1" height="1" fill="#000"/><rect x="2" y="7" width="6" height="1" fill="#000"/><rect x="8" y="7" width="5" height="1" fill="#fff"/><rect x="13" y="7" width="1" height="1" fill="#000"/><rect x="1" y="8" width="1" height="1" fill="#000"/><rect x="2" y="8" width="5" height="1" fill="#00ffff"/><rect x="7" y="8" width="1" height="1" fill="#000"/><rect x="8" y="8" width="5" height="1" fill="#fff"/><rect x="13" y="8" width="1" height="1" fill="#000"/><rect x="0" y="9" width="1" height="1" fill="#000"/><rect x="1" y="9" width="3" height="1" fill="#00ffff"/><rect x="4" y="9" width="1" height="1" fill="#000"/><rect x="5" y="9" width="3" height="1" fill="#00ffff"/><rect x="8" y="9" width="1" height="1" fill="#000"/><rect x="9" y="9" width="3" height="1" fill="#fff"/><rect x="12" y="9" width="1" height="1" fill="#000"/><rect x="0" y="10" width="1" height="1" fill="#000"/><rect x="1" y="10" width="3" height="1" fill="#00ffff"/><rect x="4" y="10" width="1" height="1" fill="#000"/><rect x="5" y="10" width="3" height="1" fill="#00ffff"/><rect x="8" y="10" width="4" height="1" fill="#000"/><rect x="0" y="11" width="1" height="1" fill="#000"/><rect x="1" y="11" width="1" height="1" fill="#00ffff"/><rect x="2" y="11" width="5" height="1" fill="#000"/><rect x="7" y="11" width="1" height="1" fill="#00ffff"/><rect x="8" y="11" width="1" height="1" fill="#000"/><rect x="9" y="11" width="1" height="1" fill="#808000"/><rect x="10" y="11" width="1" height="1" fill="#000"/><rect x="0" y="12" width="1" height="1" fill="#000"/><rect x="1" y="12" width="3" height="1" fill="#00ffff"/><rect x="4" y="12" width="1" height="1" fill="#000"/><rect x="5" y="12" width="3" height="1" fill="#00ffff"/><rect x="8" y="12" width="1" height="1" fill="#000"/><rect x="9" y="12" width="4" height="1" fill="#0000ff"/><rect x="13" y="12" width="1" height="1" fill="#000"/><rect x="0" y="13" width="1" height="1" fill="#000"/><rect x="1" y="13" width="3" height="1" fill="#00ffff"/><rect x="4" y="13" width="1" height="1" fill="#000"/><rect x="5" y="13" width="3" height="1" fill="#00ffff"/><rect x="8" y="13" width="1" height="1" fill="#000"/><rect x="9" y="13" width="5" height="1" fill="#0000ff"/><rect x="14" y="13" width="1" height="1" fill="#000"/><rect x="1" y="14" width="1" height="1" fill="#000"/><rect x="2" y="14" width="5" height="1" fill="#00ffff"/><rect x="7" y="14" width="9" height="1" fill="#000"/><rect x="2" y="15" width="5" height="1" fill="#000"/></svg><div style="left:23px;top:136px;font-size:11px;line-height:11px;letter-spacing:-0.1px;white-space:pre;filter:url(#cr);">202 Rozrachunki z dostawcami</div><div style="left:101px;top:136px;width:600px;text-align:center;font-size:11px;line-height:11px;font-weight:bold;color:#0000ff;white-space:pre;filter:url(#cr);">B</div><div style="left:-118px;top:136px;width:600px;text-align:right;font-size:11px;line-height:11px;white-space:pre;filter:url(#cr);">2002</div><svg style="position:absolute;left:4px;top:151px;overflow:visible" width="16" height="15" shape-rendering="crispEdges"><rect x="7" y="1" width="2" height="1" fill="#000"/><rect x="6" y="2" width="1" height="1" fill="#000"/><rect x="7" y="2" width="2" height="1" fill="#ffff00"/><rect x="9" y="2" width="1" height="1" fill="#000"/><rect x="5" y="3" width="1" height="1" fill="#000"/><rect x="6" y="3" width="4" height="1" fill="#ffff00"/><rect x="10" y="3" width="1" height="1" fill="#000"/><rect x="4" y="4" width="1" height="1" fill="#000"/><rect x="5" y="4" width="6" height="1" fill="#ffff00"/><rect x="11" y="4" width="1" height="1" fill="#000"/><rect x="3" y="5" width="1" height="1" fill="#000"/><rect x="4" y="5" width="8" height="1" fill="#ffff00"/><rect x="12" y="5" width="1" height="1" fill="#000"/><rect x="2" y="6" width="1" height="1" fill="#000"/><rect x="3" y="6" width="10" height="1" fill="#ffff00"/><rect x="13" y="6" width="1" height="1" fill="#000"/><rect x="1" y="7" width="1" height="1" fill="#000"/><rect x="2" y="7" width="12" height="1" fill="#ffff00"/><rect x="14" y="7" width="1" height="1" fill="#000"/><rect x="1" y="8" width="1" height="1" fill="#000"/><rect x="2" y="8" width="12" height="1" fill="#ffff00"/><rect x="14" y="8" width="1" height="1" fill="#000"/><rect x="2" y="9" width="1" height="1" fill="#000"/><rect x="3" y="9" width="10" height="1" fill="#ffff00"/><rect x="13" y="9" width="1" height="1" fill="#000"/><rect x="3" y="10" width="1" height="1" fill="#000"/><rect x="4" y="10" width="8" height="1" fill="#ffff00"/><rect x="12" y="10" width="1" height="1" fill="#000"/><rect x="4" y="11" width="1" height="1" fill="#000"/><rect x="5" y="11" width="6" height="1" fill="#ffff00"/><rect x="11" y="11" width="1" height="1" fill="#000"/><rect x="5" y="12" width="1" height="1" fill="#000"/><rect x="6" y="12" width="4" height="1" fill="#ffff00"/><rect x="10" y="12" width="1" height="1" fill="#000"/><rect x="6" y="13" width="1" height="1" fill="#000"/><rect x="7" y="13" width="2" height="1" fill="#ffff00"/><rect x="9" y="13" width="1" height="1" fill="#000"/><rect x="7" y="14" width="2" height="1" fill="#000"/></svg><div style="left:23px;top:154px;font-size:11px;line-height:11px;letter-spacing:-0.1px;white-space:pre;filter:url(#cr);">203 Pracownicy</div><div style="left:101px;top:154px;width:600px;text-align:center;font-size:11px;line-height:11px;font-weight:bold;color:#0000ff;white-space:pre;filter:url(#cr);">B</div><div style="left:-118px;top:154px;width:600px;text-align:right;font-size:11px;line-height:11px;white-space:pre;filter:url(#cr);">2002</div><svg style="position:absolute;left:4px;top:169px;overflow:visible" width="16" height="15" shape-rendering="crispEdges"><rect x="7" y="1" width="2" height="1" fill="#000"/><rect x="6" y="2" width="1" height="1" fill="#000"/><rect x="7" y="2" width="2" height="1" fill="#ffff00"/><rect x="9" y="2" width="1" height="1" fill="#000"/><rect x="5" y="3" width="1" height="1" fill="#000"/><rect x="6" y="3" width="4" height="1" fill="#ffff00"/><rect x="10" y="3" width="1" height="1" fill="#000"/><rect x="4" y="4" width="1" height="1" fill="#000"/><rect x="5" y="4" width="6" height="1" fill="#ffff00"/><rect x="11" y="4" width="1" height="1" fill="#000"/><rect x="3" y="5" width="1" height="1" fill="#000"/><rect x="4" y="5" width="8" height="1" fill="#ffff00"/><rect x="12" y="5" width="1" height="1" fill="#000"/><rect x="2" y="6" width="1" height="1" fill="#000"/><rect x="3" y="6" width="10" height="1" fill="#ffff00"/><rect x="13" y="6" width="1" height="1" fill="#000"/><rect x="1" y="7" width="1" height="1" fill="#000"/><rect x="2" y="7" width="12" height="1" fill="#ffff00"/><rect x="14" y="7" width="1" height="1" fill="#000"/><rect x="1" y="8" width="1" height="1" fill="#000"/><rect x="2" y="8" width="12" height="1" fill="#ffff00"/><rect x="14" y="8" width="1" height="1" fill="#000"/><rect x="2" y="9" width="1" height="1" fill="#000"/><rect x="3" y="9" width="10" height="1" fill="#ffff00"/><rect x="13" y="9" width="1" height="1" fill="#000"/><rect x="3" y="10" width="1" height="1" fill="#000"/><rect x="4" y="10" width="8" height="1" fill="#ffff00"/><rect x="12" y="10" width="1" height="1" fill="#000"/><rect x="4" y="11" width="1" height="1" fill="#000"/><rect x="5" y="11" width="6" height="1" fill="#ffff00"/><rect x="11" y="11" width="1" height="1" fill="#000"/><rect x="5" y="12" width="1" height="1" fill="#000"/><rect x="6" y="12" width="4" height="1" fill="#ffff00"/><rect x="10" y="12" width="1" height="1" fill="#000"/><rect x="6" y="13" width="1" height="1" fill="#000"/><rect x="7" y="13" width="2" height="1" fill="#ffff00"/><rect x="9" y="13" width="1" height="1" fill="#000"/><rect x="7" y="14" width="2" height="1" fill="#000"/></svg><div style="left:23px;top:172px;font-size:11px;line-height:11px;letter-spacing:-0.1px;white-space:pre;filter:url(#cr);">204 Rozrachunki publiczne</div><div style="left:101px;top:172px;width:600px;text-align:center;font-size:11px;line-height:11px;font-weight:bold;color:#0000ff;white-space:pre;filter:url(#cr);">B</div><div style="left:-118px;top:172px;width:600px;text-align:right;font-size:11px;line-height:11px;white-space:pre;filter:url(#cr);">2002</div><svg style="position:absolute;left:4px;top:187px;overflow:visible" width="16" height="16" shape-rendering="crispEdges"><rect x="8" y="0" width="4" height="1" fill="#000"/><rect x="6" y="1" width="2" height="1" fill="#000"/><rect x="8" y="1" width="4" height="1" fill="#808000"/><rect x="12" y="1" width="2" height="1" fill="#000"/><rect x="5" y="2" width="1" height="1" fill="#000"/><rect x="6" y="2" width="4" height="1" fill="#808000"/><rect x="10" y="2" width="2" height="1" fill="#000"/><rect x="12" y="2" width="1" height="1" fill="#fff"/><rect x="13" y="2" width="2" height="1" fill="#000"/><rect x="5" y="3" width="1" height="1" fill="#000"/><rect x="6" y="3" width="3" height="1" fill="#808000"/><rect x="9" y="3" width="1" height="1" fill="#000"/><rect x="10" y="3" width="2" height="1" fill="#fff"/><rect x="12" y="3" width="1" height="1" fill="#808000"/><rect x="13" y="3" width="1" height="1" fill="#000"/><rect x="4" y="4" width="1" height="1" fill="#000"/><rect x="5" y="4" width="3" height="1" fill="#808000"/><rect x="8" y="4" width="1" height="1" fill="#000"/><rect x="9" y="4" width="4" height="1" fill="#fff"/><rect x="13" y="4" width="2" height="1" fill="#000"/><rect x="4" y="5" width="1" height="1" fill="#000"/><rect x="5" y="5" width="2" height="1" fill="#808000"/><rect x="7" y="5" width="1" height="1" fill="#000"/><rect x="8" y="5" width="4" height="1" fill="#fff"/><rect x="12" y="5" width="1" height="1" fill="#0000ff"/><rect x="13" y="5" width="1" height="1" fill="#000"/><rect x="4" y="6" width="1" height="1" fill="#000"/><rect x="5" y="6" width="2" height="1" fill="#808000"/><rect x="7" y="6" width="1" height="1" fill="#000"/><rect x="8" y="6" width="6" height="1" fill="#fff"/><rect x="14" y="6" width="1" height="1" fill="#000"/><rect x="2" y="7" width="6" height="1" fill="#000"/><rect x="8" y="7" width="5" height="1" fill="#fff"/><rect x="13" y="7" width="1" height="1" fill="#000"/><rect x="1" y="8" width="1" height="1" fill="#000"/><rect x="2" y="8" width="5" height="1" fill="#00ffff"/><rect x="7" y="8" width="1" height="1" fill="#000"/><rect x="8" y="8" width="5" height="1" fill="#fff"/><rect x="13" y="8" width="1" height="1" fill="#000"/><rect x="0" y="9" width="1" height="1" fill="#000"/><rect x="1" y="9" width="3" height="1" fill="#00ffff"/><rect x="4" y="9" width="1" height="1" fill="#000"/><rect x="5" y="9" width="3" height="1" fill="#00ffff"/><rect x="8" y="9" width="1" height="1" fill="#000"/><rect x="9" y="9" width="3" height="1" fill="#fff"/><rect x="12" y="9" width="1" height="1" fill="#000"/><rect x="0" y="10" width="1" height="1" fill="#000"/><rect x="1" y="10" width="3" height="1" fill="#00ffff"/><rect x="4" y="10" width="1" height="1" fill="#000"/><rect x="5" y="10" width="3" height="1" fill="#00ffff"/><rect x="8" y="10" width="4" height="1" fill="#000"/><rect x="0" y="11" width="1" height="1" fill="#000"/><rect x="1" y="11" width="1" height="1" fill="#00ffff"/><rect x="2" y="11" width="5" height="1" fill="#000"/><rect x="7" y="11" width="1" height="1" fill="#00ffff"/><rect x="8" y="11" width="1" height="1" fill="#000"/><rect x="9" y="11" width="1" height="1" fill="#808000"/><rect x="10" y="11" width="1" height="1" fill="#000"/><rect x="0" y="12" width="1" height="1" fill="#000"/><rect x="1" y="12" width="3" height="1" fill="#00ffff"/><rect x="4" y="12" width="1" height="1" fill="#000"/><rect x="5" y="12" width="3" height="1" fill="#00ffff"/><rect x="8" y="12" width="1" height="1" fill="#000"/><rect x="9" y="12" width="4" height="1" fill="#0000ff"/><rect x="13" y="12" width="1" height="1" fill="#000"/><rect x="0" y="13" width="1" height="1" fill="#000"/><rect x="1" y="13" width="3" height="1" fill="#00ffff"/><rect x="4" y="13" width="1" height="1" fill="#000"/><rect x="5" y="13" width="3" height="1" fill="#00ffff"/><rect x="8" y="13" width="1" height="1" fill="#000"/><rect x="9" y="13" width="5" height="1" fill="#0000ff"/><rect x="14" y="13" width="1" height="1" fill="#000"/><rect x="1" y="14" width="1" height="1" fill="#000"/><rect x="2" y="14" width="5" height="1" fill="#00ffff"/><rect x="7" y="14" width="9" height="1" fill="#000"/><rect x="2" y="15" width="5" height="1" fill="#000"/></svg><div style="left:23px;top:190px;font-size:11px;line-height:11px;letter-spacing:-0.1px;white-space:pre;filter:url(#cr);">206 Dostawcy</div><div style="left:101px;top:190px;width:600px;text-align:center;font-size:11px;line-height:11px;font-weight:bold;color:#0000ff;white-space:pre;filter:url(#cr);">B</div><div style="left:-118px;top:190px;width:600px;text-align:right;font-size:11px;line-height:11px;white-space:pre;filter:url(#cr);">2002</div><svg style="position:absolute;left:4px;top:205px;overflow:visible" width="16" height="15" shape-rendering="crispEdges"><rect x="7" y="1" width="2" height="1" fill="#000"/><rect x="6" y="2" width="1" height="1" fill="#000"/><rect x="7" y="2" width="2" height="1" fill="#ffff00"/><rect x="9" y="2" width="1" height="1" fill="#000"/><rect x="5" y="3" width="1" height="1" fill="#000"/><rect x="6" y="3" width="4" height="1" fill="#ffff00"/><rect x="10" y="3" width="1" height="1" fill="#000"/><rect x="4" y="4" width="1" height="1" fill="#000"/><rect x="5" y="4" width="6" height="1" fill="#ffff00"/><rect x="11" y="4" width="1" height="1" fill="#000"/><rect x="3" y="5" width="1" height="1" fill="#000"/><rect x="4" y="5" width="8" height="1" fill="#ffff00"/><rect x="12" y="5" width="1" height="1" fill="#000"/><rect x="2" y="6" width="1" height="1" fill="#000"/><rect x="3" y="6" width="10" height="1" fill="#ffff00"/><rect x="13" y="6" width="1" height="1" fill="#000"/><rect x="1" y="7" width="1" height="1" fill="#000"/><rect x="2" y="7" width="12" height="1" fill="#ffff00"/><rect x="14" y="7" width="1" height="1" fill="#000"/><rect x="1" y="8" width="1" height="1" fill="#000"/><rect x="2" y="8" width="12" height="1" fill="#ffff00"/><rect x="14" y="8" width="1" height="1" fill="#000"/><rect x="2" y="9" width="1" height="1" fill="#000"/><rect x="3" y="9" width="10" height="1" fill="#ffff00"/><rect x="13" y="9" width="1" height="1" fill="#000"/><rect x="3" y="10" width="1" height="1" fill="#000"/><rect x="4" y="10" width="8" height="1" fill="#ffff00"/><rect x="12" y="10" width="1" height="1" fill="#000"/><rect x="4" y="11" width="1" height="1" fill="#000"/><rect x="5" y="11" width="6" height="1" fill="#ffff00"/><rect x="11" y="11" width="1" height="1" fill="#000"/><rect x="5" y="12" width="1" height="1" fill="#000"/><rect x="6" y="12" width="4" height="1" fill="#ffff00"/><rect x="10" y="12" width="1" height="1" fill="#000"/><rect x="6" y="13" width="1" height="1" fill="#000"/><rect x="7" y="13" width="2" height="1" fill="#ffff00"/><rect x="9" y="13" width="1" height="1" fill="#000"/><rect x="7" y="14" width="2" height="1" fill="#000"/></svg><div style="left:23px;top:208px;font-size:11px;line-height:11px;letter-spacing:-0.1px;white-space:pre;filter:url(#cr);">207 konto oddziału</div><div style="left:101px;top:208px;width:600px;text-align:center;font-size:11px;line-height:11px;font-weight:bold;color:#0000ff;white-space:pre;filter:url(#cr);">B</div><div style="left:-118px;top:208px;width:600px;text-align:right;font-size:11px;line-height:11px;white-space:pre;filter:url(#cr);">2002</div><svg style="position:absolute;left:4px;top:223px;overflow:visible" width="16" height="15" shape-rendering="crispEdges"><rect x="7" y="1" width="2" height="1" fill="#000"/><rect x="6" y="2" width="1" height="1" fill="#000"/><rect x="7" y="2" width="2" height="1" fill="#00ffff"/><rect x="9" y="2" width="1" height="1" fill="#000"/><rect x="5" y="3" width="1" height="1" fill="#000"/><rect x="6" y="3" width="4" height="1" fill="#00ffff"/><rect x="10" y="3" width="1" height="1" fill="#000"/><rect x="4" y="4" width="1" height="1" fill="#000"/><rect x="5" y="4" width="2" height="1" fill="#00ffff"/><rect x="7" y="4" width="2" height="1" fill="#000"/><rect x="9" y="4" width="2" height="1" fill="#00ffff"/><rect x="11" y="4" width="1" height="1" fill="#000"/><rect x="3" y="5" width="1" height="1" fill="#000"/><rect x="4" y="5" width="3" height="1" fill="#00ffff"/><rect x="7" y="5" width="2" height="1" fill="#000"/><rect x="9" y="5" width="3" height="1" fill="#00ffff"/><rect x="12" y="5" width="1" height="1" fill="#000"/><rect x="2" y="6" width="1" height="1" fill="#000"/><rect x="3" y="6" width="4" height="1" fill="#00ffff"/><rect x="7" y="6" width="2" height="1" fill="#000"/><rect x="9" y="6" width="4" height="1" fill="#00ffff"/><rect x="13" y="6" width="1" height="1" fill="#000"/><rect x="1" y="7" width="1" height="1" fill="#000"/><rect x="2" y="7" width="2" height="1" fill="#00ffff"/><rect x="4" y="7" width="8" height="1" fill="#000"/><rect x="12" y="7" width="2" height="1" fill="#00ffff"/><rect x="14" y="7" width="1" height="1" fill="#000"/><rect x="1" y="8" width="1" height="1" fill="#000"/><rect x="2" y="8" width="2" height="1" fill="#00ffff"/><rect x="4" y="8" width="8" height="1" fill="#000"/><rect x="12" y="8" width="2" height="1" fill="#00ffff"/><rect x="14" y="8" width="1" height="1" fill="#000"/><rect x="2" y="9" width="1" height="1" fill="#000"/><rect x="3" y="9" width="4" height="1" fill="#00ffff"/><rect x="7" y="9" width="2" height="1" fill="#000"/><rect x="9" y="9" width="4" height="1" fill="#00ffff"/><rect x="13" y="9" width="1" height="1" fill="#000"/><rect x="3" y="10" width="1" height="1" fill="#000"/><rect x="4" y="10" width="3" height="1" fill="#00ffff"/><rect x="7" y="10" width="2" height="1" fill="#000"/><rect x="9" y="10" width="3" height="1" fill="#00ffff"/><rect x="12" y="10" width="1" height="1" fill="#000"/><rect x="4" y="11" width="1" height="1" fill="#000"/><rect x="5" y="11" width="2" height="1" fill="#00ffff"/><rect x="7" y="11" width="2" height="1" fill="#000"/><rect x="9" y="11" width="2" height="1" fill="#00ffff"/><rect x="11" y="11" width="1" height="1" fill="#000"/><rect x="5" y="12" width="1" height="1" fill="#000"/><rect x="6" y="12" width="4" height="1" fill="#00ffff"/><rect x="10" y="12" width="1" height="1" fill="#000"/><rect x="6" y="13" width="1" height="1" fill="#000"/><rect x="7" y="13" width="2" height="1" fill="#00ffff"/><rect x="9" y="13" width="1" height="1" fill="#000"/><rect x="7" y="14" width="2" height="1" fill="#000"/></svg><div style="left:23px;top:226px;font-size:11px;line-height:11px;letter-spacing:-0.1px;white-space:pre;filter:url(#cr);">208 BO</div><div style="left:101px;top:226px;width:600px;text-align:center;font-size:11px;line-height:11px;font-weight:bold;color:#0000ff;white-space:pre;filter:url(#cr);">B</div><div style="left:-118px;top:226px;width:600px;text-align:right;font-size:11px;line-height:11px;white-space:pre;filter:url(#cr);">2002</div><svg style="position:absolute;left:4px;top:241px;overflow:visible" width="16" height="15" shape-rendering="crispEdges"><rect x="7" y="1" width="2" height="1" fill="#000"/><rect x="6" y="2" width="1" height="1" fill="#000"/><rect x="7" y="2" width="2" height="1" fill="#00ffff"/><rect x="9" y="2" width="1" height="1" fill="#000"/><rect x="5" y="3" width="1" height="1" fill="#000"/><rect x="6" y="3" width="4" height="1" fill="#00ffff"/><rect x="10" y="3" width="1" height="1" fill="#000"/><rect x="4" y="4" width="1" height="1" fill="#000"/><rect x="5" y="4" width="2" height="1" fill="#00ffff"/><rect x="7" y="4" width="2" height="1" fill="#000"/><rect x="9" y="4" width="2" height="1" fill="#00ffff"/><rect x="11" y="4" width="1" height="1" fill="#000"/><rect x="3" y="5" width="1" height="1" fill="#000"/><rect x="4" y="5" width="3" height="1" fill="#00ffff"/><rect x="7" y="5" width="2" height="1" fill="#000"/><rect x="9" y="5" width="3" height="1" fill="#00ffff"/><rect x="12" y="5" width="1" height="1" fill="#000"/><rect x="2" y="6" width="1" height="1" fill="#000"/><rect x="3" y="6" width="4" height="1" fill="#00ffff"/><rect x="7" y="6" width="2" height="1" fill="#000"/><rect x="9" y="6" width="4" height="1" fill="#00ffff"/><rect x="13" y="6" width="1" height="1" fill="#000"/><rect x="1" y="7" width="1" height="1" fill="#000"/><rect x="2" y="7" width="2" height="1" fill="#00ffff"/><rect x="4" y="7" width="8" height="1" fill="#000"/><rect x="12" y="7" width="2" height="1" fill="#00ffff"/><rect x="14" y="7" width="1" height="1" fill="#000"/><rect x="1" y="8" width="1" height="1" fill="#000"/><rect x="2" y="8" width="2" height="1" fill="#00ffff"/><rect x="4" y="8" width="8" height="1" fill="#000"/><rect x="12" y="8" width="2" height="1" fill="#00ffff"/><rect x="14" y="8" width="1" height="1" fill="#000"/><rect x="2" y="9" width="1" height="1" fill="#000"/><rect x="3" y="9" width="4" height="1" fill="#00ffff"/><rect x="7" y="9" width="2" height="1" fill="#000"/><rect x="9" y="9" width="4" height="1" fill="#00ffff"/><rect x="13" y="9" width="1" height="1" fill="#000"/><rect x="3" y="10" width="1" height="1" fill="#000"/><rect x="4" y="10" width="3" height="1" fill="#00ffff"/><rect x="7" y="10" width="2" height="1" fill="#000"/><rect x="9" y="10" width="3" height="1" fill="#00ffff"/><rect x="12" y="10" width="1" height="1" fill="#000"/><rect x="4" y="11" width="1" height="1" fill="#000"/><rect x="5" y="11" width="2" height="1" fill="#00ffff"/><rect x="7" y="11" width="2" height="1" fill="#000"/><rect x="9" y="11" width="2" height="1" fill="#00ffff"/><rect x="11" y="11" width="1" height="1" fill="#000"/><rect x="5" y="12" width="1" height="1" fill="#000"/><rect x="6" y="12" width="4" height="1" fill="#00ffff"/><rect x="10" y="12" width="1" height="1" fill="#000"/><rect x="6" y="13" width="1" height="1" fill="#000"/><rect x="7" y="13" width="2" height="1" fill="#00ffff"/><rect x="9" y="13" width="1" height="1" fill="#000"/><rect x="7" y="14" width="2" height="1" fill="#000"/></svg><div style="left:23px;top:244px;font-size:11px;line-height:11px;letter-spacing:-0.1px;white-space:pre;filter:url(#cr);">209 test_numeracji</div><div style="left:101px;top:244px;width:600px;text-align:center;font-size:11px;line-height:11px;font-weight:bold;color:#0000ff;white-space:pre;filter:url(#cr);">B</div><div style="left:-118px;top:244px;width:600px;text-align:right;font-size:11px;line-height:11px;white-space:pre;filter:url(#cr);">2002</div><svg style="position:absolute;left:4px;top:259px;overflow:visible" width="16" height="16" shape-rendering="crispEdges"><rect x="8" y="0" width="4" height="1" fill="#000"/><rect x="6" y="1" width="2" height="1" fill="#000"/><rect x="8" y="1" width="4" height="1" fill="#808000"/><rect x="12" y="1" width="2" height="1" fill="#000"/><rect x="5" y="2" width="1" height="1" fill="#000"/><rect x="6" y="2" width="4" height="1" fill="#808000"/><rect x="10" y="2" width="2" height="1" fill="#000"/><rect x="12" y="2" width="1" height="1" fill="#fff"/><rect x="13" y="2" width="2" height="1" fill="#000"/><rect x="5" y="3" width="1" height="1" fill="#000"/><rect x="6" y="3" width="3" height="1" fill="#808000"/><rect x="9" y="3" width="1" height="1" fill="#000"/><rect x="10" y="3" width="2" height="1" fill="#fff"/><rect x="12" y="3" width="1" height="1" fill="#808000"/><rect x="13" y="3" width="1" height="1" fill="#000"/><rect x="4" y="4" width="1" height="1" fill="#000"/><rect x="5" y="4" width="3" height="1" fill="#808000"/><rect x="8" y="4" width="1" height="1" fill="#000"/><rect x="9" y="4" width="4" height="1" fill="#fff"/><rect x="13" y="4" width="2" height="1" fill="#000"/><rect x="4" y="5" width="1" height="1" fill="#000"/><rect x="5" y="5" width="2" height="1" fill="#808000"/><rect x="7" y="5" width="1" height="1" fill="#000"/><rect x="8" y="5" width="4" height="1" fill="#fff"/><rect x="12" y="5" width="1" height="1" fill="#0000ff"/><rect x="13" y="5" width="1" height="1" fill="#000"/><rect x="4" y="6" width="1" height="1" fill="#000"/><rect x="5" y="6" width="2" height="1" fill="#808000"/><rect x="7" y="6" width="1" height="1" fill="#000"/><rect x="8" y="6" width="6" height="1" fill="#fff"/><rect x="14" y="6" width="1" height="1" fill="#000"/><rect x="2" y="7" width="6" height="1" fill="#000"/><rect x="8" y="7" width="5" height="1" fill="#fff"/><rect x="13" y="7" width="1" height="1" fill="#000"/><rect x="1" y="8" width="1" height="1" fill="#000"/><rect x="2" y="8" width="5" height="1" fill="#00ffff"/><rect x="7" y="8" width="1" height="1" fill="#000"/><rect x="8" y="8" width="5" height="1" fill="#fff"/><rect x="13" y="8" width="1" height="1" fill="#000"/><rect x="0" y="9" width="1" height="1" fill="#000"/><rect x="1" y="9" width="3" height="1" fill="#00ffff"/><rect x="4" y="9" width="1" height="1" fill="#000"/><rect x="5" y="9" width="3" height="1" fill="#00ffff"/><rect x="8" y="9" width="1" height="1" fill="#000"/><rect x="9" y="9" width="3" height="1" fill="#fff"/><rect x="12" y="9" width="1" height="1" fill="#000"/><rect x="0" y="10" width="1" height="1" fill="#000"/><rect x="1" y="10" width="3" height="1" fill="#00ffff"/><rect x="4" y="10" width="1" height="1" fill="#000"/><rect x="5" y="10" width="3" height="1" fill="#00ffff"/><rect x="8" y="10" width="4" height="1" fill="#000"/><rect x="0" y="11" width="1" height="1" fill="#000"/><rect x="1" y="11" width="1" height="1" fill="#00ffff"/><rect x="2" y="11" width="5" height="1" fill="#000"/><rect x="7" y="11" width="1" height="1" fill="#00ffff"/><rect x="8" y="11" width="1" height="1" fill="#000"/><rect x="9" y="11" width="1" height="1" fill="#808000"/><rect x="10" y="11" width="1" height="1" fill="#000"/><rect x="0" y="12" width="1" height="1" fill="#000"/><rect x="1" y="12" width="3" height="1" fill="#00ffff"/><rect x="4" y="12" width="1" height="1" fill="#000"/><rect x="5" y="12" width="3" height="1" fill="#00ffff"/><rect x="8" y="12" width="1" height="1" fill="#000"/><rect x="9" y="12" width="4" height="1" fill="#0000ff"/><rect x="13" y="12" width="1" height="1" fill="#000"/><rect x="0" y="13" width="1" height="1" fill="#000"/><rect x="1" y="13" width="3" height="1" fill="#00ffff"/><rect x="4" y="13" width="1" height="1" fill="#000"/><rect x="5" y="13" width="3" height="1" fill="#00ffff"/><rect x="8" y="13" width="1" height="1" fill="#000"/><rect x="9" y="13" width="5" height="1" fill="#0000ff"/><rect x="14" y="13" width="1" height="1" fill="#000"/><rect x="1" y="14" width="1" height="1" fill="#000"/><rect x="2" y="14" width="5" height="1" fill="#00ffff"/><rect x="7" y="14" width="9" height="1" fill="#000"/><rect x="2" y="15" width="5" height="1" fill="#000"/></svg><div style="left:23px;top:262px;font-size:11px;line-height:11px;letter-spacing:-0.1px;white-space:pre;filter:url(#cr);">210 Rozrachunki</div><div style="left:101px;top:262px;width:600px;text-align:center;font-size:11px;line-height:11px;font-weight:bold;color:#0000ff;white-space:pre;filter:url(#cr);">B</div><div style="left:-118px;top:262px;width:600px;text-align:right;font-size:11px;line-height:11px;white-space:pre;filter:url(#cr);">2002</div><svg style="position:absolute;left:4px;top:277px;overflow:visible" width="16" height="16" shape-rendering="crispEdges"><rect x="8" y="0" width="4" height="1" fill="#000"/><rect x="6" y="1" width="2" height="1" fill="#000"/><rect x="8" y="1" width="4" height="1" fill="#808000"/><rect x="12" y="1" width="2" height="1" fill="#000"/><rect x="5" y="2" width="1" height="1" fill="#000"/><rect x="6" y="2" width="4" height="1" fill="#808000"/><rect x="10" y="2" width="2" height="1" fill="#000"/><rect x="12" y="2" width="1" height="1" fill="#fff"/><rect x="13" y="2" width="2" height="1" fill="#000"/><rect x="5" y="3" width="1" height="1" fill="#000"/><rect x="6" y="3" width="3" height="1" fill="#808000"/><rect x="9" y="3" width="1" height="1" fill="#000"/><rect x="10" y="3" width="2" height="1" fill="#fff"/><rect x="12" y="3" width="1" height="1" fill="#808000"/><rect x="13" y="3" width="1" height="1" fill="#000"/><rect x="4" y="4" width="1" height="1" fill="#000"/><rect x="5" y="4" width="3" height="1" fill="#808000"/><rect x="8" y="4" width="1" height="1" fill="#000"/><rect x="9" y="4" width="4" height="1" fill="#fff"/><rect x="13" y="4" width="2" height="1" fill="#000"/><rect x="4" y="5" width="1" height="1" fill="#000"/><rect x="5" y="5" width="2" height="1" fill="#808000"/><rect x="7" y="5" width="1" height="1" fill="#000"/><rect x="8" y="5" width="4" height="1" fill="#fff"/><rect x="12" y="5" width="1" height="1" fill="#0000ff"/><rect x="13" y="5" width="1" height="1" fill="#000"/><rect x="4" y="6" width="1" height="1" fill="#000"/><rect x="5" y="6" width="2" height="1" fill="#808000"/><rect x="7" y="6" width="1" height="1" fill="#000"/><rect x="8" y="6" width="6" height="1" fill="#fff"/><rect x="14" y="6" width="1" height="1" fill="#000"/><rect x="2" y="7" width="6" height="1" fill="#000"/><rect x="8" y="7" width="5" height="1" fill="#fff"/><rect x="13" y="7" width="1" height="1" fill="#000"/><rect x="1" y="8" width="1" height="1" fill="#000"/><rect x="2" y="8" width="5" height="1" fill="#00ffff"/><rect x="7" y="8" width="1" height="1" fill="#000"/><rect x="8" y="8" width="5" height="1" fill="#fff"/><rect x="13" y="8" width="1" height="1" fill="#000"/><rect x="0" y="9" width="1" height="1" fill="#000"/><rect x="1" y="9" width="3" height="1" fill="#00ffff"/><rect x="4" y="9" width="1" height="1" fill="#000"/><rect x="5" y="9" width="3" height="1" fill="#00ffff"/><rect x="8" y="9" width="1" height="1" fill="#000"/><rect x="9" y="9" width="3" height="1" fill="#fff"/><rect x="12" y="9" width="1" height="1" fill="#000"/><rect x="0" y="10" width="1" height="1" fill="#000"/><rect x="1" y="10" width="3" height="1" fill="#00ffff"/><rect x="4" y="10" width="1" height="1" fill="#000"/><rect x="5" y="10" width="3" height="1" fill="#00ffff"/><rect x="8" y="10" width="4" height="1" fill="#000"/><rect x="0" y="11" width="1" height="1" fill="#000"/><rect x="1" y="11" width="1" height="1" fill="#00ffff"/><rect x="2" y="11" width="5" height="1" fill="#000"/><rect x="7" y="11" width="1" height="1" fill="#00ffff"/><rect x="8" y="11" width="1" height="1" fill="#000"/><rect x="9" y="11" width="1" height="1" fill="#808000"/><rect x="10" y="11" width="1" height="1" fill="#000"/><rect x="0" y="12" width="1" height="1" fill="#000"/><rect x="1" y="12" width="3" height="1" fill="#00ffff"/><rect x="4" y="12" width="1" height="1" fill="#000"/><rect x="5" y="12" width="3" height="1" fill="#00ffff"/><rect x="8" y="12" width="1" height="1" fill="#000"/><rect x="9" y="12" width="4" height="1" fill="#0000ff"/><rect x="13" y="12" width="1" height="1" fill="#000"/><rect x="0" y="13" width="1" height="1" fill="#000"/><rect x="1" y="13" width="3" height="1" fill="#00ffff"/><rect x="4" y="13" width="1" height="1" fill="#000"/><rect x="5" y="13" width="3" height="1" fill="#00ffff"/><rect x="8" y="13" width="1" height="1" fill="#000"/><rect x="9" y="13" width="5" height="1" fill="#0000ff"/><rect x="14" y="13" width="1" height="1" fill="#000"/><rect x="1" y="14" width="1" height="1" fill="#000"/><rect x="2" y="14" width="5" height="1" fill="#00ffff"/><rect x="7" y="14" width="9" height="1" fill="#000"/><rect x="2" y="15" width="5" height="1" fill="#000"/></svg><div style="left:23px;top:280px;font-size:11px;line-height:11px;letter-spacing:-0.1px;white-space:pre;filter:url(#cr);">211 Rozrachunki</div><div style="left:101px;top:280px;width:600px;text-align:center;font-size:11px;line-height:11px;font-weight:bold;color:#0000ff;white-space:pre;filter:url(#cr);">B</div><div style="left:-118px;top:280px;width:600px;text-align:right;font-size:11px;line-height:11px;white-space:pre;filter:url(#cr);">2002</div><svg style="position:absolute;left:4px;top:295px;overflow:visible" width="16" height="16" shape-rendering="crispEdges"><rect x="8" y="0" width="4" height="1" fill="#000"/><rect x="6" y="1" width="2" height="1" fill="#000"/><rect x="8" y="1" width="4" height="1" fill="#808000"/><rect x="12" y="1" width="2" height="1" fill="#000"/><rect x="5" y="2" width="1" height="1" fill="#000"/><rect x="6" y="2" width="4" height="1" fill="#808000"/><rect x="10" y="2" width="2" height="1" fill="#000"/><rect x="12" y="2" width="1" height="1" fill="#fff"/><rect x="13" y="2" width="2" height="1" fill="#000"/><rect x="5" y="3" width="1" height="1" fill="#000"/><rect x="6" y="3" width="3" height="1" fill="#808000"/><rect x="9" y="3" width="1" height="1" fill="#000"/><rect x="10" y="3" width="2" height="1" fill="#fff"/><rect x="12" y="3" width="1" height="1" fill="#808000"/><rect x="13" y="3" width="1" height="1" fill="#000"/><rect x="4" y="4" width="1" height="1" fill="#000"/><rect x="5" y="4" width="3" height="1" fill="#808000"/><rect x="8" y="4" width="1" height="1" fill="#000"/><rect x="9" y="4" width="4" height="1" fill="#fff"/><rect x="13" y="4" width="2" height="1" fill="#000"/><rect x="4" y="5" width="1" height="1" fill="#000"/><rect x="5" y="5" width="2" height="1" fill="#808000"/><rect x="7" y="5" width="1" height="1" fill="#000"/><rect x="8" y="5" width="4" height="1" fill="#fff"/><rect x="12" y="5" width="1" height="1" fill="#0000ff"/><rect x="13" y="5" width="1" height="1" fill="#000"/><rect x="4" y="6" width="1" height="1" fill="#000"/><rect x="5" y="6" width="2" height="1" fill="#808000"/><rect x="7" y="6" width="1" height="1" fill="#000"/><rect x="8" y="6" width="6" height="1" fill="#fff"/><rect x="14" y="6" width="1" height="1" fill="#000"/><rect x="2" y="7" width="6" height="1" fill="#000"/><rect x="8" y="7" width="5" height="1" fill="#fff"/><rect x="13" y="7" width="1" height="1" fill="#000"/><rect x="1" y="8" width="1" height="1" fill="#000"/><rect x="2" y="8" width="5" height="1" fill="#00ffff"/><rect x="7" y="8" width="1" height="1" fill="#000"/><rect x="8" y="8" width="5" height="1" fill="#fff"/><rect x="13" y="8" width="1" height="1" fill="#000"/><rect x="0" y="9" width="1" height="1" fill="#000"/><rect x="1" y="9" width="3" height="1" fill="#00ffff"/><rect x="4" y="9" width="1" height="1" fill="#000"/><rect x="5" y="9" width="3" height="1" fill="#00ffff"/><rect x="8" y="9" width="1" height="1" fill="#000"/><rect x="9" y="9" width="3" height="1" fill="#fff"/><rect x="12" y="9" width="1" height="1" fill="#000"/><rect x="0" y="10" width="1" height="1" fill="#000"/><rect x="1" y="10" width="3" height="1" fill="#00ffff"/><rect x="4" y="10" width="1" height="1" fill="#000"/><rect x="5" y="10" width="3" height="1" fill="#00ffff"/><rect x="8" y="10" width="4" height="1" fill="#000"/><rect x="0" y="11" width="1" height="1" fill="#000"/><rect x="1" y="11" width="1" height="1" fill="#00ffff"/><rect x="2" y="11" width="5" height="1" fill="#000"/><rect x="7" y="11" width="1" height="1" fill="#00ffff"/><rect x="8" y="11" width="1" height="1" fill="#000"/><rect x="9" y="11" width="1" height="1" fill="#808000"/><rect x="10" y="11" width="1" height="1" fill="#000"/><rect x="0" y="12" width="1" height="1" fill="#000"/><rect x="1" y="12" width="3" height="1" fill="#00ffff"/><rect x="4" y="12" width="1" height="1" fill="#000"/><rect x="5" y="12" width="3" height="1" fill="#00ffff"/><rect x="8" y="12" width="1" height="1" fill="#000"/><rect x="9" y="12" width="4" height="1" fill="#0000ff"/><rect x="13" y="12" width="1" height="1" fill="#000"/><rect x="0" y="13" width="1" height="1" fill="#000"/><rect x="1" y="13" width="3" height="1" fill="#00ffff"/><rect x="4" y="13" width="1" height="1" fill="#000"/><rect x="5" y="13" width="3" height="1" fill="#00ffff"/><rect x="8" y="13" width="1" height="1" fill="#000"/><rect x="9" y="13" width="5" height="1" fill="#0000ff"/><rect x="14" y="13" width="1" height="1" fill="#000"/><rect x="1" y="14" width="1" height="1" fill="#000"/><rect x="2" y="14" width="5" height="1" fill="#00ffff"/><rect x="7" y="14" width="9" height="1" fill="#000"/><rect x="2" y="15" width="5" height="1" fill="#000"/></svg><div style="left:23px;top:298px;font-size:11px;line-height:11px;letter-spacing:-0.1px;white-space:pre;filter:url(#cr);">212 Waluta do</div><div style="left:101px;top:298px;width:600px;text-align:center;font-size:11px;line-height:11px;font-weight:bold;color:#0000ff;white-space:pre;filter:url(#cr);">B</div><div style="left:-118px;top:298px;width:600px;text-align:right;font-size:11px;line-height:11px;white-space:pre;filter:url(#cr);">2002</div><svg style="position:absolute;left:4px;top:313px;overflow:visible" width="16" height="16" shape-rendering="crispEdges"><rect x="8" y="0" width="4" height="1" fill="#000"/><rect x="6" y="1" width="2" height="1" fill="#000"/><rect x="8" y="1" width="4" height="1" fill="#808000"/><rect x="12" y="1" width="2" height="1" fill="#000"/><rect x="5" y="2" width="1" height="1" fill="#000"/><rect x="6" y="2" width="4" height="1" fill="#808000"/><rect x="10" y="2" width="2" height="1" fill="#000"/><rect x="12" y="2" width="1" height="1" fill="#fff"/><rect x="13" y="2" width="2" height="1" fill="#000"/><rect x="5" y="3" width="1" height="1" fill="#000"/><rect x="6" y="3" width="3" height="1" fill="#808000"/><rect x="9" y="3" width="1" height="1" fill="#000"/><rect x="10" y="3" width="2" height="1" fill="#fff"/><rect x="12" y="3" width="1" height="1" fill="#808000"/><rect x="13" y="3" width="1" height="1" fill="#000"/><rect x="4" y="4" width="1" height="1" fill="#000"/><rect x="5" y="4" width="3" height="1" fill="#808000"/><rect x="8" y="4" width="1" height="1" fill="#000"/><rect x="9" y="4" width="4" height="1" fill="#fff"/><rect x="13" y="4" width="2" height="1" fill="#000"/><rect x="4" y="5" width="1" height="1" fill="#000"/><rect x="5" y="5" width="2" height="1" fill="#808000"/><rect x="7" y="5" width="1" height="1" fill="#000"/><rect x="8" y="5" width="4" height="1" fill="#fff"/><rect x="12" y="5" width="1" height="1" fill="#0000ff"/><rect x="13" y="5" width="1" height="1" fill="#000"/><rect x="4" y="6" width="1" height="1" fill="#000"/><rect x="5" y="6" width="2" height="1" fill="#808000"/><rect x="7" y="6" width="1" height="1" fill="#000"/><rect x="8" y="6" width="6" height="1" fill="#fff"/><rect x="14" y="6" width="1" height="1" fill="#000"/><rect x="2" y="7" width="6" height="1" fill="#000"/><rect x="8" y="7" width="5" height="1" fill="#fff"/><rect x="13" y="7" width="1" height="1" fill="#000"/><rect x="1" y="8" width="1" height="1" fill="#000"/><rect x="2" y="8" width="5" height="1" fill="#00ffff"/><rect x="7" y="8" width="1" height="1" fill="#000"/><rect x="8" y="8" width="5" height="1" fill="#fff"/><rect x="13" y="8" width="1" height="1" fill="#000"/><rect x="0" y="9" width="1" height="1" fill="#000"/><rect x="1" y="9" width="3" height="1" fill="#00ffff"/><rect x="4" y="9" width="1" height="1" fill="#000"/><rect x="5" y="9" width="3" height="1" fill="#00ffff"/><rect x="8" y="9" width="1" height="1" fill="#000"/><rect x="9" y="9" width="3" height="1" fill="#fff"/><rect x="12" y="9" width="1" height="1" fill="#000"/><rect x="0" y="10" width="1" height="1" fill="#000"/><rect x="1" y="10" width="3" height="1" fill="#00ffff"/><rect x="4" y="10" width="1" height="1" fill="#000"/><rect x="5" y="10" width="3" height="1" fill="#00ffff"/><rect x="8" y="10" width="4" height="1" fill="#000"/><rect x="0" y="11" width="1" height="1" fill="#000"/><rect x="1" y="11" width="1" height="1" fill="#00ffff"/><rect x="2" y="11" width="5" height="1" fill="#000"/><rect x="7" y="11" width="1" height="1" fill="#00ffff"/><rect x="8" y="11" width="1" height="1" fill="#000"/><rect x="9" y="11" width="1" height="1" fill="#808000"/><rect x="10" y="11" width="1" height="1" fill="#000"/><rect x="0" y="12" width="1" height="1" fill="#000"/><rect x="1" y="12" width="3" height="1" fill="#00ffff"/><rect x="4" y="12" width="1" height="1" fill="#000"/><rect x="5" y="12" width="3" height="1" fill="#00ffff"/><rect x="8" y="12" width="1" height="1" fill="#000"/><rect x="9" y="12" width="4" height="1" fill="#0000ff"/><rect x="13" y="12" width="1" height="1" fill="#000"/><rect x="0" y="13" width="1" height="1" fill="#000"/><rect x="1" y="13" width="3" height="1" fill="#00ffff"/><rect x="4" y="13" width="1" height="1" fill="#000"/><rect x="5" y="13" width="3" height="1" fill="#00ffff"/><rect x="8" y="13" width="1" height="1" fill="#000"/><rect x="9" y="13" width="5" height="1" fill="#0000ff"/><rect x="14" y="13" width="1" height="1" fill="#000"/><rect x="1" y="14" width="1" height="1" fill="#000"/><rect x="2" y="14" width="5" height="1" fill="#00ffff"/><rect x="7" y="14" width="9" height="1" fill="#000"/><rect x="2" y="15" width="5" height="1" fill="#000"/></svg><div style="left:23px;top:316px;font-size:11px;line-height:11px;letter-spacing:-0.1px;white-space:pre;filter:url(#cr);">213 Waluta od</div><div style="left:101px;top:316px;width:600px;text-align:center;font-size:11px;line-height:11px;font-weight:bold;color:#0000ff;white-space:pre;filter:url(#cr);">B</div><div style="left:-118px;top:316px;width:600px;text-align:right;font-size:11px;line-height:11px;white-space:pre;filter:url(#cr);">2002</div><div style="left:349px;top:0px;width:1px;height:327px;background:repeating-linear-gradient(to bottom,#c0c0c0 0,#c0c0c0 1px,transparent 1px,transparent 2px)"></div><div style="left:369px;top:0px;width:1px;height:327px;background:repeating-linear-gradient(to bottom,#c0c0c0 0,#c0c0c0 1px,transparent 1px,transparent 2px)"></div><div style="left:389px;top:0px;width:1px;height:327px;background:repeating-linear-gradient(to bottom,#c0c0c0 0,#c0c0c0 1px,transparent 1px,transparent 2px)"></div><div style="left:409px;top:0px;width:1px;height:327px;background:repeating-linear-gradient(to bottom,#c0c0c0 0,#c0c0c0 1px,transparent 1px,transparent 2px)"></div><div style="left:444px;top:0px;width:1px;height:327px;background:repeating-linear-gradient(to bottom,#c0c0c0 0,#c0c0c0 1px,transparent 1px,transparent 2px)"></div><div style="left:490px;top:0px;width:1px;height:327px;background:repeating-linear-gradient(to bottom,#c0c0c0 0,#c0c0c0 1px,transparent 1px,transparent 2px)"></div><div style="left:537px;top:0px;width:1px;height:327px;background:repeating-linear-gradient(to bottom,#c0c0c0 0,#c0c0c0 1px,transparent 1px,transparent 2px)"></div></div><div style="left:538px;top:17px;width:16px;height:327px;background-color:#fff;background-image:linear-gradient(45deg,#d4d0c8 25%,transparent 25%,transparent 75%,#d4d0c8 75%),linear-gradient(45deg,#d4d0c8 25%,transparent 25%,transparent 75%,#d4d0c8 75%);background-size:2px 2px;background-position:0 0,1px 1px;"></div><div style="left:538px;top:17px;width:16px;height:16px;background:#d4d0c8;box-shadow:inset -1px -1px #404040,inset 1px 1px #fff,inset -2px -2px #808080,inset 2px 2px #d4d0c8;"></div><svg style="position:absolute;left:542px;top:23px" width="8" height="4"><polygon points="0,4 8,4 4,0" fill="#000"/></svg><div style="left:538px;top:86px;width:16px;height:36px;background:#d4d0c8;box-shadow:inset -1px -1px #404040,inset 1px 1px #fff,inset -2px -2px #808080,inset 2px 2px #d4d0c8;"></div></div><div style="left:4px;top:373px;width:560px;height:33px;box-shadow:inset -1px -1px #808080,inset 1px 1px #fff;"></div><div style="left:6px;top:384px;font-size:11px;line-height:11px;letter-spacing:-0.2px;white-space:pre;filter:url(#cr);"><u>S</u>zukaj wg:</div><div style="left:60px;top:379px;width:300px;height:21px;box-shadow:inset -1px -1px #fff,inset 1px 1px #808080,inset -2px -2px #d4d0c8,inset 2px 2px #404040;background:#fff"></div><div style="left:65px;top:385px;font-size:11px;line-height:11px;white-space:pre;filter:url(#cr);">Numer</div><div style="left:4px;top:406px;width:560px;height:33px;box-shadow:inset -1px -1px #808080,inset 1px 1px #fff;"></div><div style="left:8px;top:410px;width:75px;height:25px;background:#d4d0c8;box-shadow:inset -1px -1px #404040,inset 1px 1px #fff,inset -2px -2px #808080,inset 2px 2px #d4d0c8;"></div><div style="left:-254.5px;top:418px;width:600px;text-align:center;font-size:11px;line-height:11px;white-space:pre;filter:url(#cr);">F2 Dodaj S</div><div style="left:83px;top:410px;width:75px;height:25px;background:#d4d0c8;box-shadow:inset -1px -1px #404040,inset 1px 1px #fff,inset -2px -2px #808080,inset 2px 2px #d4d0c8;"></div><div style="left:-179.5px;top:418px;width:600px;text-align:center;font-size:11px;line-height:11px;white-space:pre;filter:url(#cr);">F3 Popraw</div><div style="left:4px;top:439px;width:560px;height:33px;box-shadow:inset -1px -1px #808080,inset 1px 1px #fff;"></div><div style="left:8px;top:443px;width:75px;height:25px;background:#d4d0c8;box-shadow:inset -1px -1px #404040,inset 1px 1px #fff,inset -2px -2px #808080,inset 2px 2px #d4d0c8;"></div><div style="left:-254.5px;top:451px;width:600px;text-align:center;font-size:11px;line-height:11px;white-space:pre;filter:url(#cr);">SP Rozwiń</div><div style="left:83px;top:443px;width:75px;height:25px;background:#d4d0c8;box-shadow:inset -1px -1px #404040,inset 1px 1px #fff,inset -2px -2px #808080,inset 2px 2px #d4d0c8;"></div><div style="left:-179.5px;top:451px;width:600px;text-align:center;font-size:11px;line-height:11px;white-space:pre;filter:url(#cr);">F10 Kartoteka</div></div><div style="left:98px;top:139px;width:388px;height:299px;overflow:hidden;background:#d4d0c8;box-shadow:inset -1px -1px #404040,inset 1px 1px #d4d0c8,inset -2px -2px #808080,inset 2px 2px #fff"><div style="left:3px;top:3px;width:382px;height:18px;background:linear-gradient(to right,#808080,#c0c0c0)"></div><div style="left:5px;top:6px;font-size:12px;line-height:12px;font-weight:bold;color:#d4d0c8;white-space:pre;filter:url(#cr);">Informacja o stanie konta (2009)</div><div style="left:367px;top:5px;width:16px;height:14px;background:#d4d0c8;box-shadow:inset -1px -1px #404040,inset 1px 1px #fff,inset -2px -2px #808080,inset 2px 2px #d4d0c8;"></div><svg style="position:absolute;left:371px;top:8px;overflow:visible" width="8" height="7" shape-rendering="crispEdges"><rect x="0" y="0" width="2" height="1" fill="#000"/><rect x="6" y="0" width="2" height="1" fill="#000"/><rect x="1" y="1" width="2" height="1" fill="#000"/><rect x="5" y="1" width="2" height="1" fill="#000"/><rect x="2" y="2" width="4" height="1" fill="#000"/><rect x="3" y="3" width="2" height="1" fill="#000"/><rect x="2" y="4" width="4" height="1" fill="#000"/><rect x="1" y="5" width="2" height="1" fill="#000"/><rect x="5" y="5" width="2" height="1" fill="#000"/><rect x="0" y="6" width="2" height="1" fill="#000"/><rect x="6" y="6" width="2" height="1" fill="#000"/></svg><div style="left:3px;top:22px;width:382px;height:35px;box-shadow:inset -1px -1px #808080,inset 1px 1px #fff;"></div><div style="left:17px;top:28px;font-size:11px;line-height:11px;white-space:pre;filter:url(#cr);">Konto:</div><div style="left:60px;top:27px;font-size:12px;line-height:12px;font-weight:bold;white-space:pre;filter:url(#cr);">200</div><div style="left:60px;top:41px;font-size:12px;line-height:12px;font-weight:bold;letter-spacing:-0.2px;white-space:pre;filter:url(#cr);">Rozrachunki z odbiorcami krajowymi</div><div style="left:3px;top:57px;width:382px;height:207px;box-shadow:inset -1px -1px #808080,inset 1px 1px #fff;"></div><div style="left:139px;top:64px;width:13px;height:13px;box-shadow:inset -1px -1px #fff,inset 1px 1px #808080,inset -2px -2px #d4d0c8,inset 2px 2px #404040;background:#fff"></div><svg style="position:absolute;left:142px;top:67px;overflow:visible" width="7" height="7" shape-rendering="crispEdges"><rect x="6" y="0" width="1" height="1" fill="#000"/><rect x="5" y="1" width="2" height="1" fill="#000"/><rect x="0" y="2" width="1" height="1" fill="#000"/><rect x="4" y="2" width="3" height="1" fill="#000"/><rect x="0" y="3" width="2" height="1" fill="#000"/><rect x="3" y="3" width="3" height="1" fill="#000"/><rect x="0" y="4" width="5" height="1" fill="#000"/><rect x="1" y="5" width="3" height="1" fill="#000"/><rect x="2" y="6" width="1" height="1" fill="#000"/></svg><div style="left:157px;top:65px;font-size:11px;line-height:11px;letter-spacing:-0.15px;white-space:pre;filter:url(#cr);">Uwzglednić <u>b</u>ufor</div><div style="left:-467px;top:87px;width:600px;text-align:right;font-size:11px;line-height:11px;white-space:pre;filter:url(#cr);">O<u>d</u>dział:</div><div style="left:139px;top:80px;width:236px;height:21px;box-shadow:inset -1px -1px #fff,inset 1px 1px #808080,inset -2px -2px #d4d0c8,inset 2px 2px #404040;background:#ffffc8"></div><div style="left:357px;top:82px;width:16px;height:17px;background:#d4d0c8;box-shadow:inset -1px -1px #404040,inset 1px 1px #fff,inset -2px -2px #808080,inset 2px 2px #d4d0c8;"></div><svg style="position:absolute;left:361px;top:89px" width="8" height="4"><polygon points="0,0 8,0 4,4" fill="#000"/></svg><div style="left:143px;top:86px;font-size:11px;line-height:11px;white-space:pre;filter:url(#cr);">CENTRALA</div><div style="left:-467px;top:108px;width:600px;text-align:right;font-size:11px;line-height:11px;white-space:pre;filter:url(#cr);"><u>O</u>kres obrachunkowy:</div><div style="left:139px;top:102px;width:236px;height:20px;box-shadow:inset -1px -1px #fff,inset 1px 1px #808080,inset -2px -2px #d4d0c8,inset 2px 2px #404040;background:#ffffc8"></div><div style="left:357px;top:104px;width:16px;height:16px;background:#d4d0c8;box-shadow:inset -1px -1px #404040,inset 1px 1px #fff,inset -2px -2px #808080,inset 2px 2px #d4d0c8;"></div><svg style="position:absolute;left:361px;top:111px" width="8" height="4"><polygon points="0,0 8,0 4,4" fill="#000"/></svg><div style="left:143px;top:108px;font-size:11px;line-height:11px;white-space:pre;filter:url(#cr);">2009 kwiecień  (O)</div><div style="left:-344px;top:129px;width:600px;text-align:right;font-size:11px;line-height:11px;white-space:pre;filter:url(#cr);">WN</div><div style="left:-466px;top:143px;width:600px;text-align:right;font-size:11px;line-height:11px;letter-spacing:-0.15px;white-space:pre;filter:url(#cr);">Bilans otwarcia:</div><div style="left:-344px;top:142px;width:600px;text-align:right;font-size:12px;line-height:12px;font-weight:bold;letter-spacing:0.3px;white-space:pre;filter:url(#cr);">0.00</div><div style="left:-466px;top:164px;width:600px;text-align:right;font-size:11px;line-height:11px;letter-spacing:-0.15px;white-space:pre;filter:url(#cr);">Obroty poprzednie:</div><div style="left:-344px;top:163px;width:600px;text-align:right;font-size:12px;line-height:12px;font-weight:bold;letter-spacing:0.3px;white-space:pre;filter:url(#cr);">2 310.13</div><div style="left:-466px;top:185px;width:600px;text-align:right;font-size:11px;line-height:11px;letter-spacing:-0.15px;white-space:pre;filter:url(#cr);">Saldo na początek okresu:</div><div style="left:-344px;top:184px;width:600px;text-align:right;font-size:12px;line-height:12px;font-weight:bold;letter-spacing:0.3px;white-space:pre;filter:url(#cr);">2 310.13</div><div style="left:-466px;top:206px;width:600px;text-align:right;font-size:11px;line-height:11px;letter-spacing:-0.15px;white-space:pre;filter:url(#cr);">Obroty w okresie:</div><div style="left:-344px;top:205px;width:600px;text-align:right;font-size:12px;line-height:12px;font-weight:bold;letter-spacing:0.3px;white-space:pre;filter:url(#cr);">126 882.14</div><div style="left:-466px;top:227px;width:600px;text-align:right;font-size:11px;line-height:11px;letter-spacing:-0.15px;white-space:pre;filter:url(#cr);">Obroty od początku roku:</div><div style="left:-344px;top:226px;width:600px;text-align:right;font-size:12px;line-height:12px;font-weight:bold;letter-spacing:0.3px;white-space:pre;filter:url(#cr);">129 192.27</div><div style="left:-466px;top:248px;width:600px;text-align:right;font-size:11px;line-height:11px;letter-spacing:-0.15px;white-space:pre;filter:url(#cr);">Saldo na koniec okresu:</div><div style="left:-344px;top:247px;width:600px;text-align:right;font-size:12px;line-height:12px;font-weight:bold;letter-spacing:0.3px;color:#0000ff;white-space:pre;filter:url(#cr);">129 192.27</div><div style="left:3px;top:264px;width:382px;height:32px;box-shadow:inset -1px -1px #808080,inset 1px 1px #fff;"></div><div style="left:7px;top:268px;width:75px;height:25px;background:#d4d0c8;box-shadow:inset -1px -1px #404040,inset 1px 1px #fff,inset -2px -2px #808080,inset 2px 2px #d4d0c8;"></div><div style="left:-255.5px;top:276px;width:600px;text-align:center;font-size:11px;line-height:11px;white-space:pre;filter:url(#cr);">F6 Zapisy</div><div style="left:82px;top:268px;width:76px;height:25px;background:#d4d0c8;box-shadow:inset -1px -1px #404040,inset 1px 1px #fff,inset -2px -2px #808080,inset 2px 2px #d4d0c8;"></div><div style="left:-180.0px;top:276px;width:600px;text-align:center;font-size:11px;line-height:11px;white-space:pre;filter:url(#cr);">F7 Obroty</div></div><div style="left:359px;top:231px;width:550px;height:313px;overflow:hidden;background:#d4d0c8;box-shadow:inset -1px -1px #404040,inset 1px 1px #d4d0c8,inset -2px -2px #808080,inset 2px 2px #fff;"><div style="left:4px;top:4px;width:542px;height:18px;background:linear-gradient(to right,#0a246a,#a6caf0)"></div><svg style="position:absolute;left:5px;top:7px;overflow:visible" width="17" height="11" shape-rendering="crispEdges"><rect x="8" y="0" width="1" height="1" fill="#000"/><rect x="7" y="1" width="1" height="1" fill="#000"/><rect x="8" y="1" width="1" height="1" fill="#f0ffff"/><rect x="9" y="1" width="1" height="1" fill="#000"/><rect x="6" y="2" width="1" height="1" fill="#000"/><rect x="7" y="2" width="3" height="1" fill="#f0ffff"/><rect x="10" y="2" width="1" height="1" fill="#000"/><rect x="5" y="3" width="1" height="1" fill="#000"/><rect x="6" y="3" width="5" height="1" fill="#f0ffff"/><rect x="11" y="3" width="1" height="1" fill="#000"/><rect x="4" y="4" width="1" height="1" fill="#000"/><rect x="5" y="4" width="7" height="1" fill="#c8ffff"/><rect x="12" y="4" width="1" height="1" fill="#000"/><rect x="3" y="5" width="1" height="1" fill="#000"/><rect x="4" y="5" width="4" height="1" fill="#c8ffff"/><rect x="8" y="5" width="1" height="1" fill="#000"/><rect x="9" y="5" width="4" height="1" fill="#c8ffff"/><rect x="13" y="5" width="1" height="1" fill="#000"/><rect x="2" y="6" width="1" height="1" fill="#000"/><rect x="3" y="6" width="6" height="1" fill="#c8ffff"/><rect x="9" y="6" width="1" height="1" fill="#000"/><rect x="10" y="6" width="4" height="1" fill="#c8ffff"/><rect x="14" y="6" width="1" height="1" fill="#000"/><rect x="1" y="7" width="1" height="1" fill="#000"/><rect x="2" y="7" width="8" height="1" fill="#90f4f4"/><rect x="10" y="7" width="1" height="1" fill="#000"/><rect x="11" y="7" width="4" height="1" fill="#90f4f4"/><rect x="15" y="7" width="1" height="1" fill="#000"/><rect x="1" y="8" width="1" height="1" fill="#000"/><rect x="2" y="8" width="4" height="1" fill="#90f4f4"/><rect x="6" y="8" width="1" height="1" fill="#000"/><rect x="7" y="8" width="4" height="1" fill="#90f4f4"/><rect x="11" y="8" width="1" height="1" fill="#000"/><rect x="12" y="8" width="3" height="1" fill="#90f4f4"/><rect x="15" y="8" width="1" height="1" fill="#000"/><rect x="2" y="9" width="1" height="1" fill="#000"/><rect x="3" y="9" width="2" height="1" fill="#90f4f4"/><rect x="5" y="9" width="1" height="1" fill="#000"/><rect x="7" y="9" width="1" height="1" fill="#000"/><rect x="8" y="9" width="2" height="1" fill="#90f4f4"/><rect x="10" y="9" width="1" height="1" fill="#000"/><rect x="12" y="9" width="1" height="1" fill="#000"/><rect x="13" y="9" width="1" height="1" fill="#90f4f4"/><rect x="14" y="9" width="1" height="1" fill="#000"/><rect x="3" y="10" width="2" height="1" fill="#000"/><rect x="8" y="10" width="2" height="1" fill="#000"/><rect x="13" y="10" width="1" height="1" fill="#000"/></svg><div style="left:23px;top:7px;font-size:12px;line-height:12px;font-weight:bold;letter-spacing:-0.08px;color:#fff;white-space:pre;filter:url(#cr);">Zapisy na koncie: 200 Rozrachunki z odbiorcami krajowymi (Rok 2009) (Bufor)</div><div style="left:494px;top:6px;width:16px;height:14px;background:#d4d0c8;box-shadow:inset -1px -1px #404040,inset 1px 1px #fff,inset -2px -2px #808080,inset 2px 2px #d4d0c8;"></div><div style="left:498px;top:15px;width:6px;height:2px;background:#000"></div><div style="left:510px;top:6px;width:16px;height:14px;background:#d4d0c8;box-shadow:inset -1px -1px #404040,inset 1px 1px #fff,inset -2px -2px #808080,inset 2px 2px #d4d0c8;"></div><div style="left:513px;top:8px;width:9px;height:9px;box-shadow:inset 0 2px #000,inset 1px 0 #000,inset -1px 0 #000,inset 0 -1px #000"></div><div style="left:528px;top:6px;width:16px;height:14px;background:#d4d0c8;box-shadow:inset -1px -1px #404040,inset 1px 1px #fff,inset -2px -2px #808080,inset 2px 2px #d4d0c8;"></div><svg style="position:absolute;left:532px;top:9px;overflow:visible" width="8" height="7" shape-rendering="crispEdges"><rect x="0" y="0" width="2" height="1" fill="#000"/><rect x="6" y="0" width="2" height="1" fill="#000"/><rect x="1" y="1" width="2" height="1" fill="#000"/><rect x="5" y="1" width="2" height="1" fill="#000"/><rect x="2" y="2" width="4" height="1" fill="#000"/><rect x="3" y="3" width="2" height="1" fill="#000"/><rect x="2" y="4" width="4" height="1" fill="#000"/><rect x="1" y="5" width="2" height="1" fill="#000"/><rect x="5" y="5" width="2" height="1" fill="#000"/><rect x="0" y="6" width="2" height="1" fill="#000"/><rect x="6" y="6" width="2" height="1" fill="#000"/></svg><div style="left:4px;top:23px;width:542px;height:106px;box-shadow:inset -1px -1px #808080,inset 1px 1px #fff;"></div><div style="left:5px;top:24px;width:540px;height:104px;box-shadow:inset -1px -1px #fff,inset 1px 1px #808080,inset -2px -2px #d4d0c8,inset 2px 2px #404040;background:#fff"></div><div style="left:7px;top:26px;width:536px;height:101px;overflow:hidden;background:#fff"><div style="left:0px;top:0px;width:12px;height:17px;background:#d4d0c8"></div><div style="left:12px;top:0px;width:1px;height:17px;background:#000"></div><div style="left:13px;top:0px;width:34px;height:17px;background:#d4d0c8"></div><div style="left:47px;top:0px;width:1px;height:17px;background:#000"></div><div style="left:48px;top:0px;width:92px;height:17px;background:#d4d0c8"></div><div style="left:140px;top:0px;width:1px;height:17px;background:#000"></div><div style="left:141px;top:0px;width:32px;height:17px;background:#d4d0c8"></div><div style="left:173px;top:0px;width:1px;height:17px;background:#000"></div><div style="left:174px;top:0px;width:15px;height:17px;background:#d4d0c8"></div><div style="left:189px;top:0px;width:1px;height:17px;background:#000"></div><div style="left:190px;top:0px;width:60px;height:17px;background:#d4d0c8"></div><div style="left:250px;top:0px;width:1px;height:17px;background:#000"></div><div style="left:251px;top:0px;width:60px;height:17px;background:#d4d0c8"></div><div style="left:311px;top:0px;width:1px;height:17px;background:#000"></div><div style="left:312px;top:0px;width:57px;height:17px;background:#d4d0c8"></div><div style="left:369px;top:0px;width:1px;height:17px;background:#000"></div><div style="left:370px;top:0px;width:59px;height:17px;background:#d4d0c8"></div><div style="left:429px;top:0px;width:1px;height:17px;background:#000"></div><div style="left:430px;top:0px;width:32px;height:17px;background:#d4d0c8"></div><div style="left:462px;top:0px;width:1px;height:17px;background:#000"></div><div style="left:463px;top:0px;width:57px;height:17px;background:#d4d0c8"></div><div style="left:520px;top:0px;width:1px;height:17px;background:#000"></div><div style="left:0px;top:0px;width:520px;height:17px;overflow:hidden;"><div style="left:0px;top:0px;width:12px;height:17px;overflow:hidden;"><div style="left:3px;top:4px;font-size:11px;line-height:11px;white-space:pre;filter:url(#cr);">Z</div></div><div style="left:13px;top:0px;width:34px;height:17px;overflow:hidden;"><div style="left:2px;top:4px;font-size:11px;line-height:11px;white-space:pre;filter:url(#cr);">Nr dzie</div></div><div style="left:48px;top:0px;width:92px;height:17px;overflow:hidden;"><div style="left:2px;top:4px;font-size:11px;line-height:11px;white-space:pre;filter:url(#cr);">Nr dokumentu</div></div><div style="left:141px;top:0px;width:32px;height:17px;overflow:hidden;"><div style="left:2px;top:4px;font-size:11px;line-height:11px;white-space:pre;filter:url(#cr);">Opr.</div></div><div style="left:174px;top:0px;width:15px;height:17px;overflow:hidden;"><div style="left:3px;top:4px;font-size:11px;line-height:11px;white-space:pre;filter:url(#cr);">S</div></div><div style="left:190px;top:0px;width:60px;height:17px;overflow:hidden;"><div style="left:2px;top:4px;font-size:11px;line-height:11px;white-space:pre;filter:url(#cr);">Data ksg.</div></div><div style="left:251px;top:0px;width:60px;height:17px;overflow:hidden;"><div style="left:2px;top:4px;font-size:11px;line-height:11px;white-space:pre;filter:url(#cr);">Data wys.</div></div><div style="left:312px;top:0px;width:57px;height:17px;overflow:hidden;"><div style="left:2px;top:4px;font-size:11px;line-height:11px;white-space:pre;filter:url(#cr);">Kwota WN</div></div><div style="left:370px;top:0px;width:59px;height:17px;overflow:hidden;"><div style="left:2px;top:4px;font-size:11px;line-height:11px;white-space:pre;filter:url(#cr);">Kwota MA</div></div><div style="left:430px;top:0px;width:32px;height:17px;overflow:hidden;"><div style="left:2px;top:4px;font-size:11px;line-height:11px;white-space:pre;filter:url(#cr);">Poz.</div></div><div style="left:463px;top:0px;width:57px;height:17px;overflow:hidden;"><div style="left:2px;top:4px;font-size:11px;line-height:11px;white-space:pre;filter:url(#cr);">Teczka</div></div></div><div style="left:0px;top:17px;width:12px;height:16px;background:#0a246a"></div><div style="left:13px;top:17px;width:507px;height:16px;background:#dfeddf"></div><div style="left:51px;top:21px;font-size:11px;line-height:11px;white-space:pre;filter:url(#cr);">09-FVS/0877</div><div style="left:143px;top:21px;font-size:11px;line-height:11px;white-space:pre;filter:url(#cr);">66</div><div style="left:178px;top:21px;font-size:11px;line-height:11px;white-space:pre;filter:url(#cr);">B</div><div style="left:192px;top:21px;font-size:11px;line-height:11px;white-space:pre;filter:url(#cr);">2009-04-01</div><div style="left:253px;top:21px;font-size:11px;line-height:11px;white-space:pre;filter:url(#cr);">2009-04-01</div><div style="left:-233px;top:21px;width:600px;text-align:right;font-size:11px;line-height:11px;white-space:pre;filter:url(#cr);">1 361.66</div><div style="left:-174px;top:21px;width:600px;text-align:right;font-size:11px;line-height:11px;white-space:pre;filter:url(#cr);">0.00</div><div style="left:-142px;top:21px;width:600px;text-align:right;font-size:11px;line-height:11px;white-space:pre;filter:url(#cr);">1</div><div style="left:463px;top:17px;width:57px;height:16px;overflow:hidden;"><div style="left:2px;top:4px;font-size:11px;line-height:11px;white-space:pre;filter:url(#cr);">IN 0/3687/</div></div><div style="left:51px;top:37px;font-size:11px;line-height:11px;white-space:pre;filter:url(#cr);">50053/RZA/09</div><div style="left:143px;top:37px;font-size:11px;line-height:11px;white-space:pre;filter:url(#cr);">66</div><div style="left:178px;top:37px;font-size:11px;line-height:11px;white-space:pre;filter:url(#cr);">B</div><div style="left:192px;top:37px;font-size:11px;line-height:11px;white-space:pre;filter:url(#cr);">2009-04-01</div><div style="left:253px;top:37px;font-size:11px;line-height:11px;white-space:pre;filter:url(#cr);">2009-04-01</div><div style="left:-233px;top:37px;width:600px;text-align:right;font-size:11px;line-height:11px;white-space:pre;filter:url(#cr);">292.32</div><div style="left:-174px;top:37px;width:600px;text-align:right;font-size:11px;line-height:11px;white-space:pre;filter:url(#cr);">0.00</div><div style="left:-142px;top:37px;width:600px;text-align:right;font-size:11px;line-height:11px;white-space:pre;filter:url(#cr);">1</div><div style="left:463px;top:33px;width:57px;height:16px;overflow:hidden;"><div style="left:2px;top:4px;font-size:11px;line-height:11px;white-space:pre;filter:url(#cr);">IN 0/3684/</div></div><div style="left:51px;top:53px;font-size:11px;line-height:11px;white-space:pre;filter:url(#cr);">50219/RZA/09</div><div style="left:143px;top:53px;font-size:11px;line-height:11px;white-space:pre;filter:url(#cr);">66</div><div style="left:178px;top:53px;font-size:11px;line-height:11px;white-space:pre;filter:url(#cr);">B</div><div style="left:192px;top:53px;font-size:11px;line-height:11px;white-space:pre;filter:url(#cr);">2009-04-01</div><div style="left:253px;top:53px;font-size:11px;line-height:11px;white-space:pre;filter:url(#cr);">2009-04-01</div><div style="left:-233px;top:53px;width:600px;text-align:right;font-size:11px;line-height:11px;white-space:pre;filter:url(#cr);">518.72</div><div style="left:-174px;top:53px;width:600px;text-align:right;font-size:11px;line-height:11px;white-space:pre;filter:url(#cr);">0.00</div><div style="left:-142px;top:53px;width:600px;text-align:right;font-size:11px;line-height:11px;white-space:pre;filter:url(#cr);">1</div><div style="left:463px;top:49px;width:57px;height:16px;overflow:hidden;"><div style="left:2px;top:4px;font-size:11px;line-height:11px;white-space:pre;filter:url(#cr);">IN 0/3686/</div></div><div style="left:51px;top:69px;font-size:11px;line-height:11px;white-space:pre;filter:url(#cr);">50298/RZA/09</div><div style="left:143px;top:69px;font-size:11px;line-height:11px;white-space:pre;filter:url(#cr);">66</div><div style="left:178px;top:69px;font-size:11px;line-height:11px;white-space:pre;filter:url(#cr);">B</div><div style="left:192px;top:69px;font-size:11px;line-height:11px;white-space:pre;filter:url(#cr);">2009-04-01</div><div style="left:253px;top:69px;font-size:11px;line-height:11px;white-space:pre;filter:url(#cr);">2009-04-01</div><div style="left:-233px;top:69px;width:600px;text-align:right;font-size:11px;line-height:11px;white-space:pre;filter:url(#cr);">241.41</div><div style="left:-174px;top:69px;width:600px;text-align:right;font-size:11px;line-height:11px;white-space:pre;filter:url(#cr);">0.00</div><div style="left:-142px;top:69px;width:600px;text-align:right;font-size:11px;line-height:11px;white-space:pre;filter:url(#cr);">1</div><div style="left:463px;top:65px;width:57px;height:16px;overflow:hidden;"><div style="left:2px;top:4px;font-size:11px;line-height:11px;white-space:pre;filter:url(#cr);">IN 0/3685/</div></div><div style="left:12px;top:17px;width:1px;height:64px;background:#c0c0c0"></div><div style="left:47px;top:17px;width:1px;height:64px;background:#c0c0c0"></div><div style="left:140px;top:17px;width:1px;height:64px;background:#c0c0c0"></div><div style="left:173px;top:17px;width:1px;height:64px;background:#c0c0c0"></div><div style="left:189px;top:17px;width:1px;height:64px;background:#c0c0c0"></div><div style="left:250px;top:17px;width:1px;height:64px;background:#c0c0c0"></div><div style="left:311px;top:17px;width:1px;height:64px;background:#c0c0c0"></div><div style="left:369px;top:17px;width:1px;height:64px;background:#c0c0c0"></div><div style="left:429px;top:17px;width:1px;height:64px;background:#c0c0c0"></div><div style="left:462px;top:17px;width:1px;height:64px;background:#c0c0c0"></div><div style="left:520px;top:17px;width:1px;height:64px;background:#c0c0c0"></div><div style="left:520px;top:0px;width:16px;height:85px;background-color:#fff;background-image:linear-gradient(45deg,#d4d0c8 25%,transparent 25%,transparent 75%,#d4d0c8 75%),linear-gradient(45deg,#d4d0c8 25%,transparent 25%,transparent 75%,#d4d0c8 75%);background-size:2px 2px;background-position:0 0,1px 1px;"></div><div style="left:520px;top:0px;width:16px;height:16px;background:#d4d0c8;box-shadow:inset -1px -1px #404040,inset 1px 1px #fff,inset -2px -2px #808080,inset 2px 2px #d4d0c8;"></div><svg style="position:absolute;left:524px;top:6px" width="8" height="4"><polygon points="0,4 8,4 4,0" fill="#000"/></svg><div style="left:520px;top:16px;width:16px;height:16px;background:#d4d0c8;box-shadow:inset -1px -1px #404040,inset 1px 1px #fff,inset -2px -2px #808080,inset 2px 2px #d4d0c8;"></div><div style="left:520px;top:69px;width:16px;height:16px;background:#d4d0c8;box-shadow:inset -1px -1px #404040,inset 1px 1px #fff,inset -2px -2px #808080,inset 2px 2px #d4d0c8;"></div><svg style="position:absolute;left:524px;top:75px" width="8" height="4"><polygon points="0,0 8,0 4,4" fill="#000"/></svg><div style="left:0px;top:85px;width:520px;height:16px;background-color:#fff;background-image:linear-gradient(45deg,#d4d0c8 25%,transparent 25%,transparent 75%,#d4d0c8 75%),linear-gradient(45deg,#d4d0c8 25%,transparent 25%,transparent 75%,#d4d0c8 75%);background-size:2px 2px;background-position:0 0,1px 1px;"></div><div style="left:0px;top:85px;width:16px;height:16px;background:#d4d0c8;box-shadow:inset -1px -1px #404040,inset 1px 1px #fff,inset -2px -2px #808080,inset 2px 2px #d4d0c8;"></div><svg style="position:absolute;left:6px;top:89px" width="4" height="8"><polygon points="4,0 4,8 0,4" fill="#000"/></svg><div style="left:16px;top:85px;width:16px;height:16px;background:#d4d0c8;box-shadow:inset -1px -1px #404040,inset 1px 1px #fff,inset -2px -2px #808080,inset 2px 2px #d4d0c8;"></div><div style="left:504px;top:85px;width:16px;height:16px;background:#d4d0c8;box-shadow:inset -1px -1px #404040,inset 1px 1px #fff,inset -2px -2px #808080,inset 2px 2px #d4d0c8;"></div><svg style="position:absolute;left:510px;top:89px" width="4" height="8"><polygon points="0,0 0,8 4,4" fill="#000"/></svg><div style="left:520px;top:85px;width:16px;height:16px;background:#d4d0c8"></div></div><div style="left:4px;top:129px;width:542px;height:29px;box-shadow:inset -1px -1px #808080,inset 1px 1px #fff;"></div><div style="left:10px;top:139px;font-size:11px;line-height:11px;letter-spacing:-0.25px;white-space:pre;filter:url(#cr);">Szukaj wg:</div><div style="left:62px;top:134px;width:158px;height:20px;box-shadow:inset -1px -1px #fff,inset 1px 1px #808080,inset -2px -2px #d4d0c8,inset 2px 2px #404040;background:#fff"></div><div style="left:202px;top:136px;width:16px;height:16px;background:#d4d0c8;box-shadow:inset -1px -1px #404040,inset 1px 1px #fff,inset -2px -2px #808080,inset 2px 2px #d4d0c8;"></div><svg style="position:absolute;left:206px;top:143px" width="8" height="4"><polygon points="0,0 8,0 4,4" fill="#000"/></svg><div style="left:66px;top:139px;font-size:11px;line-height:11px;white-space:pre;filter:url(#cr);">Nr dokumentu</div><div style="left:221px;top:134px;width:154px;height:20px;box-shadow:inset -1px -1px #fff,inset 1px 1px #808080,inset -2px -2px #d4d0c8,inset 2px 2px #404040;background:#fff"></div><div style="left:224px;top:137px;width:1px;height:13px;background:#000"></div><div style="left:398px;top:138px;width:13px;height:13px;box-shadow:inset -1px -1px #fff,inset 1px 1px #808080,inset -2px -2px #d4d0c8,inset 2px 2px #404040;background:#fff"></div><div style="left:416px;top:139px;font-size:11px;line-height:11px;white-space:pre;filter:url(#cr);">Pokaż w walucie</div><div style="left:506px;top:138px;width:13px;height:13px;box-shadow:inset -1px -1px #fff,inset 1px 1px #808080,inset -2px -2px #d4d0c8,inset 2px 2px #404040;background:#fff"></div><svg style="position:absolute;left:509px;top:141px;overflow:visible" width="7" height="7" shape-rendering="crispEdges"><rect x="6" y="0" width="1" height="1" fill="#000"/><rect x="5" y="1" width="2" height="1" fill="#000"/><rect x="0" y="2" width="1" height="1" fill="#000"/><rect x="4" y="2" width="3" height="1" fill="#000"/><rect x="0" y="3" width="2" height="1" fill="#000"/><rect x="3" y="3" width="3" height="1" fill="#000"/><rect x="0" y="4" width="5" height="1" fill="#000"/><rect x="1" y="5" width="3" height="1" fill="#000"/><rect x="2" y="6" width="1" height="1" fill="#000"/></svg><div style="left:521px;top:134px;width:25px;height:18px;overflow:hidden;background:#d4d0c8"><div style="left:3px;top:5px;font-size:11px;line-height:11px;white-space:pre;filter:url(#cr);">Ukryj</div></div><div style="left:4px;top:158px;width:542px;height:112px;box-shadow:inset -1px -1px #808080,inset 1px 1px #fff;"></div><div style="left:-68px;top:161px;width:600px;text-align:right;font-size:11px;line-height:11px;letter-spacing:-0.2px;color:#0000ff;white-space:pre;filter:url(#cr);">kwota winien:</div><div style="left:-161px;top:180px;width:600px;text-align:right;font-size:11px;line-height:11px;letter-spacing:-0.1px;white-space:pre;filter:url(#cr);">Suma zaznaczonych:</div><div style="left:-68px;top:179px;width:600px;text-align:right;font-size:12px;line-height:12px;font-weight:bold;letter-spacing:0.3px;color:#008000;white-space:pre;filter:url(#cr);">0.00</div><div style="left:-161px;top:194px;width:600px;text-align:right;font-size:11px;line-height:11px;letter-spacing:-0.1px;white-space:pre;filter:url(#cr);">BO roku:</div><div style="left:-68px;top:193px;width:600px;text-align:right;font-size:12px;line-height:12px;font-weight:bold;letter-spacing:0.3px;color:#008000;white-space:pre;filter:url(#cr);">0.00</div><div style="left:-161px;top:207px;width:600px;text-align:right;font-size:11px;line-height:11px;letter-spacing:-0.1px;white-space:pre;filter:url(#cr);">Obroty nar. od p. roku:</div><div style="left:-68px;top:206px;width:600px;text-align:right;font-size:12px;line-height:12px;font-weight:bold;letter-spacing:0.3px;color:#008000;white-space:pre;filter:url(#cr);">129 192.27</div><div style="left:-161px;top:221px;width:600px;text-align:right;font-size:11px;line-height:11px;letter-spacing:-0.1px;white-space:pre;filter:url(#cr);">Razem zapisy w okr.:</div><div style="left:-68px;top:220px;width:600px;text-align:right;font-size:12px;line-height:12px;font-weight:bold;letter-spacing:0.3px;color:#008000;white-space:pre;filter:url(#cr);">126 882.14</div><div style="left:-500px;top:194px;width:600px;text-align:right;font-size:11px;line-height:11px;letter-spacing:-0.1px;white-space:pre;filter:url(#cr);">Nr dziennika:</div><div style="left:-500px;top:208px;width:600px;text-align:right;font-size:11px;line-height:11px;letter-spacing:-0.1px;white-space:pre;filter:url(#cr);">Nr dokumentu:</div><div style="left:103px;top:207px;font-size:12px;line-height:12px;font-weight:bold;letter-spacing:0.15px;white-space:pre;filter:url(#cr);">09-FVS/0877</div><div style="left:-500px;top:222px;width:600px;text-align:right;font-size:11px;line-height:11px;letter-spacing:-0.1px;white-space:pre;filter:url(#cr);">Nr ewidencyjny:</div><div style="left:103px;top:221px;font-size:12px;line-height:12px;font-weight:bold;letter-spacing:0.15px;white-space:pre;filter:url(#cr);">FZV</div><div style="left:-500px;top:236px;width:600px;text-align:right;font-size:11px;line-height:11px;letter-spacing:-0.1px;white-space:pre;filter:url(#cr);">Data księgowania:</div><div style="left:103px;top:235px;font-size:12px;line-height:12px;font-weight:bold;letter-spacing:0.15px;white-space:pre;filter:url(#cr);">2009-04-01</div><div style="left:-500px;top:250px;width:600px;text-align:right;font-size:11px;line-height:11px;letter-spacing:-0.1px;white-space:pre;filter:url(#cr);">Data wpr. dok.:</div><div style="left:103px;top:249px;font-size:12px;line-height:12px;font-weight:bold;letter-spacing:0.15px;white-space:pre;filter:url(#cr);">2009-04-01</div><div style="left:-358px;top:222px;width:600px;text-align:right;font-size:11px;line-height:11px;white-space:pre;filter:url(#cr);">Status:</div><div style="left:243px;top:221px;font-size:12px;line-height:12px;font-weight:bold;white-space:pre;filter:url(#cr);">B</div><div style="left:-358px;top:236px;width:600px;text-align:right;font-size:11px;line-height:11px;white-space:pre;filter:url(#cr);">Opis:</div><div style="left:243px;top:235px;font-size:12px;line-height:12px;font-weight:bold;white-space:pre;filter:url(#cr);">faktura</div><div style="left:189px;top:250px;font-size:11px;line-height:11px;white-space:pre;filter:url(#cr);">Konto prz.:</div><div style="left:4px;top:270px;width:542px;height:39px;box-shadow:inset -1px -1px #808080,inset 1px 1px #fff;"></div><div style="left:10px;top:277px;width:60px;height:25px;background:#d4d0c8;box-shadow:inset -1px -1px #404040,inset 1px 1px #fff,inset -2px -2px #808080,inset 2px 2px #d4d0c8;"></div><div style="left:-260.0px;top:285px;width:600px;text-align:center;font-size:11px;line-height:11px;white-space:pre;filter:url(#cr);">F3 Szukaj</div><div style="left:71px;top:277px;width:61px;height:25px;background:#d4d0c8;box-shadow:inset -1px -1px #404040,inset 1px 1px #fff,inset -2px -2px #808080,inset 2px 2px #d4d0c8;"></div><div style="left:-198.5px;top:285px;width:600px;text-align:center;font-size:11px;line-height:11px;white-space:pre;filter:url(#cr);">F5 Drukuj</div><div style="left:132px;top:277px;width:69px;height:25px;background:#d4d0c8;box-shadow:inset -1px -1px #404040,inset 1px 1px #fff,inset -2px -2px #808080,inset 2px 2px #d4d0c8;"></div><div style="left:-133.5px;top:285px;width:600px;text-align:center;font-size:11px;line-height:11px;white-space:pre;filter:url(#cr);">F6 Podgląd</div><div style="left:201px;top:277px;width:61px;height:25px;background:#d4d0c8;box-shadow:inset -1px -1px #404040,inset 1px 1px #fff,inset -2px -2px #808080,inset 2px 2px #d4d0c8;"></div><div style="left:-68.5px;top:285px;width:600px;text-align:center;font-size:11px;line-height:11px;white-space:pre;filter:url(#cr);">F7 Excel</div><div style="left:262px;top:277px;width:69px;height:25px;background:#d4d0c8;box-shadow:inset -1px -1px #404040,inset 1px 1px #fff,inset -2px -2px #808080,inset 2px 2px #d4d0c8;"></div><div style="left:-3.5px;top:285px;width:600px;text-align:center;font-size:11px;line-height:11px;white-space:pre;filter:url(#cr);">SP Przegląd</div><div style="left:331px;top:277px;width:76px;height:25px;background:#d4d0c8;box-shadow:inset -1px -1px #404040,inset 1px 1px #fff,inset -2px -2px #808080,inset 2px 2px #d4d0c8;"></div><div style="left:69.0px;top:285px;width:600px;text-align:center;font-size:11px;line-height:11px;white-space:pre;filter:url(#cr);">F12 Zaznacz</div><div style="left:408px;top:277px;width:76px;height:25px;background:#d4d0c8;box-shadow:inset -1px -1px #404040,inset 1px 1px #fff,inset -2px -2px #808080,inset 2px 2px #d4d0c8;"></div><div style="left:410px;top:279px;width:72px;height:21px;overflow:hidden;"><div style="left:4px;top:6px;font-size:11px;line-height:11px;white-space:pre;filter:url(#cr);">Sh+F12 Zaznacz</div></div><div style="left:466px;top:277px;width:74px;height:25px;background:#d4d0c8;box-shadow:inset -1px -1px #404040,inset 1px 1px #fff,inset -2px -2px #808080,inset 2px 2px #d4d0c8;"></div><div style="left:203px;top:284px;width:600px;text-align:center;font-size:12px;line-height:12px;font-weight:bold;white-space:pre;filter:url(#cr);"><u>Z</u>amknij</div></div>
</body></html>
